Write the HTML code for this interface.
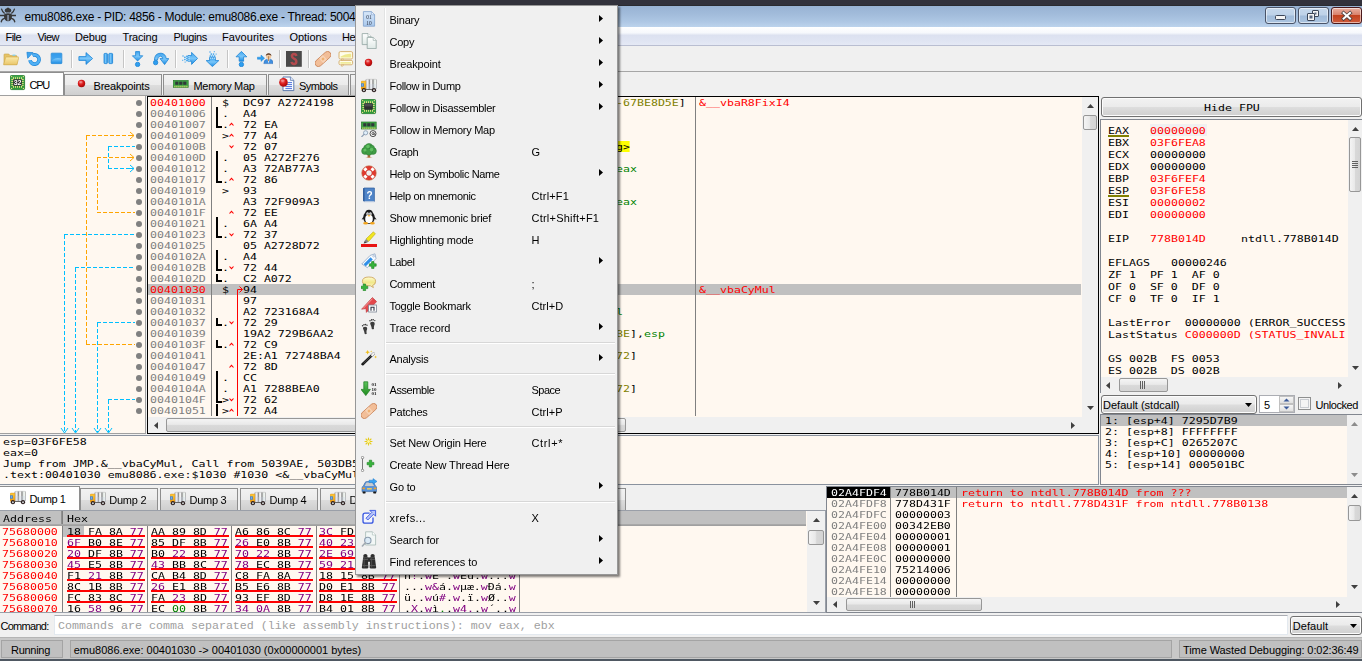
<!DOCTYPE html>
<html><head><meta charset="utf-8"><title>x64dbg</title><style>
html,body{margin:0;padding:0;}
body{width:1362px;height:661px;overflow:hidden;position:relative;background:#f0f0f0;font-family:"Liberation Sans",sans-serif;}
.a{position:absolute;display:block;}
.m{position:absolute;font:9.4px/11px "DejaVu Sans Mono","Liberation Mono",monospace;white-space:pre;transform:scaleX(1.2369);transform-origin:0 0;color:#000;margin-left:-0.6px;}
.c{position:absolute;font:11.66px/11px "Liberation Mono",monospace;white-space:pre;color:#000;}
.u{position:absolute;font-family:"Liberation Sans",sans-serif;white-space:pre;}
.wb{box-sizing:border-box;border:1px solid #4a5468;border-radius:3px;background:linear-gradient(#c6d8ec 0%,#bed2e8 48%,#a2bcda 52%,#aac4e0 100%);box-shadow:inset 0 0 0 1px rgba(255,255,255,.55);}
.sbv,.sbh{position:absolute;background:#f0f0f0;}
.th{position:absolute;box-sizing:border-box;border:1px solid #979797;border-radius:2px;}
.thv{background:linear-gradient(90deg,#f4f4f4 0%,#e9e9e9 45%,#d8d8d8 55%,#d4d4d4 100%);}
.thh{background:linear-gradient(#f4f4f4 0%,#e9e9e9 45%,#d8d8d8 55%,#d4d4d4 100%);}
</style></head><body>

<svg width="0" height="0" style="position:absolute;left:0;top:0"><defs>
<linearGradient id="gB" x1="0" y1="0" x2="0" y2="1"><stop offset="0" stop-color="#3fa4ef"/><stop offset=".5" stop-color="#79c6f9"/><stop offset="1" stop-color="#1b8ce4"/></linearGradient>
<linearGradient id="gBh" x1="0" y1="0" x2="1" y2="0"><stop offset="0" stop-color="#3fa4ef"/><stop offset=".5" stop-color="#79c6f9"/><stop offset="1" stop-color="#1b8ce4"/></linearGradient>
<linearGradient id="gF" x1="0" y1="0" x2="0" y2="1"><stop offset="0" stop-color="#fbe9a8"/><stop offset="1" stop-color="#e9c66a"/></linearGradient>
<linearGradient id="gG" x1="0" y1="0" x2="0" y2="1"><stop offset="0" stop-color="#5cc45c"/><stop offset="1" stop-color="#1e8a1e"/></linearGradient>
<radialGradient id="gR" cx=".4" cy=".35" r=".7"><stop offset="0" stop-color="#f07070"/><stop offset=".5" stop-color="#d81818"/><stop offset="1" stop-color="#9c0808"/></radialGradient>
<linearGradient id="gPg" x1="0" y1="0" x2="0" y2="1"><stop offset="0" stop-color="#d8e8fa"/><stop offset="1" stop-color="#a9c8ec"/></linearGradient>
<linearGradient id="gW" x1="0" y1="0" x2="0" y2="1"><stop offset="0" stop-color="#ffffff"/><stop offset="1" stop-color="#dfe9e6"/></linearGradient>
<linearGradient id="gY" x1="0" y1="0" x2="0" y2="1"><stop offset="0" stop-color="#fffbd0"/><stop offset=".5" stop-color="#f1e88a"/><stop offset="1" stop-color="#fdf6c0"/></linearGradient>
<linearGradient id="gT" x1="0" y1="0" x2="1" y2="0"><stop offset="0" stop-color="#e8e8e8"/><stop offset=".5" stop-color="#a8a8a8"/><stop offset="1" stop-color="#dcdcdc"/></linearGradient>
<linearGradient id="gTk" x1="0" y1="0" x2="1" y2="0"><stop offset="0" stop-color="#8e8e8e"/><stop offset=".1" stop-color="#e2e2e6"/><stop offset=".22" stop-color="#f6f6f8"/><stop offset=".33" stop-color="#7e7e7e"/><stop offset=".42" stop-color="#e4e4e4"/><stop offset=".54" stop-color="#f6f6f6"/><stop offset=".66" stop-color="#7e7e7e"/><stop offset=".76" stop-color="#e0e6e2"/><stop offset=".88" stop-color="#f2f6f2"/><stop offset="1" stop-color="#a0a0a0"/></linearGradient>
<linearGradient id="gCab" x1="0" y1="0" x2="0" y2="1"><stop offset="0" stop-color="#fbc83c"/><stop offset="1" stop-color="#f09c10"/></linearGradient>
</defs></svg>

<div class="a" style="left:0px;top:0px;width:1362px;height:5px;background:#32323c;"></div>
<div class="a" style="left:0px;top:5px;width:1362px;height:1px;background:#2a2b30;"></div>
<div class="a" style="left:0px;top:6px;width:1362px;height:21px;background:linear-gradient(#98b3d4 0%,#a2bcdb 40%,#aec7e4 75%,#bcd3ec 100%);"></div>
<svg class="a" style="left:0px;top:7px" width="16" height="16" viewBox="0 0 16 16"><g fill="#383838" stroke="none"><ellipse cx="8" cy="9.6" rx="4" ry="4.7"/><path d="M4.7 3.6Q4.7 1.4 6.8 1.2Q8 -.4 9.2 1.2Q11.3 1.4 11.3 3.6Q11.3 5.6 8 5.6Q4.7 5.6 4.7 3.6z"/></g><g fill="none" stroke="#383838" stroke-width="1.3" stroke-linecap="round"><path d="M4.8 6.6Q2.4 5.4 1.6 2.2M11.2 6.6Q13.6 5.4 14.4 2.2M-.5 8.5H16M4.6 11.4Q1.8 12 1.2 14.8M11.4 11.4Q14.2 12 14.8 14.8"/></g><rect x="7.2" y="8" width="1.7" height="5.6" fill="#8593a8"/><path d="M4.6 6.4Q8 5.2 11.4 6.4" stroke="#a9c0dc" stroke-width=".8" fill="none"/></svg>
<div class="u" style="left:24.5px;top:8.5px;height:16px;line-height:16px;font-size:12px;color:#000;letter-spacing:-0.283px;">emu8086.exe - PID: 4856 - Module: emu8086.exe - Thread: 5004</div>
<div class="a wb" style="left:1265px;top:7px;width:31px;height:17px;"><div class="a" style="left:9px;top:7px;width:9px;height:3px;background:#f4f4f4;border:1px solid #3c4658;border-radius:1.5px"></div></div>
<div class="a wb" style="left:1298px;top:7px;width:31px;height:17px;"><div class="a" style="left:13px;top:2px;width:5px;height:5px;border:1px solid #3c4658;background:#f4f4f4;box-shadow:inset 0 0 0 1.5px #f4f4f4, inset 0 0 0 3px #5a6880;border-radius:1px"></div><div class="a" style="left:8px;top:5px;width:6px;height:6px;border:1px solid #3c4658;background:#f4f4f4;box-shadow:inset 0 0 0 1.5px #f4f4f4, inset 0 0 0 3px #5a6880;border-radius:1px"></div></div>
<div class="a wb" style="left:1331px;top:7px;width:31px;height:17px;background:linear-gradient(#eab0a2 0%,#d9826c 45%,#c2421f 50%,#cf5c3c 100%);border-color:#4a1a1c"><svg class="a" style="left:8px;top:2px" width="14" height="12" viewBox="0 0 14 12"><path d="M3.6 3L10 8.6M10 3L3.6 8.6" stroke="#4a4040" stroke-width="3.6" stroke-linecap="square"/><path d="M3.6 3L10 8.6M10 3L3.6 8.6" stroke="#fff" stroke-width="2" stroke-linecap="square"/></svg></div>
<div class="a" style="left:0px;top:27px;width:1362px;height:19px;background:linear-gradient(#ffffff 0%,#f6f8fc 30%,#e9edf6 38%,#dce1f0 42%,#dfe4f2 70%,#e6eaf6 100%);"></div>
<div class="a" style="left:0px;top:45px;width:1362px;height:1px;background:#b9bed1;"></div>
<div class="u" style="left:5.5px;top:29px;height:16px;line-height:16px;font-size:11px;color:#000;letter-spacing:-0.559px;">File</div>
<div class="u" style="left:37.5px;top:29px;height:16px;line-height:16px;font-size:11px;color:#000;letter-spacing:-0.539px;">View</div>
<div class="u" style="left:75px;top:29px;height:16px;line-height:16px;font-size:11px;color:#000;letter-spacing:-0.184px;">Debug</div>
<div class="u" style="left:122.5px;top:29px;height:16px;line-height:16px;font-size:11px;color:#000;letter-spacing:-0.183px;">Tracing</div>
<div class="u" style="left:173.5px;top:29px;height:16px;line-height:16px;font-size:11px;color:#000;letter-spacing:-0.368px;">Plugins</div>
<div class="u" style="left:222px;top:29px;height:16px;line-height:16px;font-size:11px;color:#000;letter-spacing:0.064px;">Favourites</div>
<div class="u" style="left:289.5px;top:29px;height:16px;line-height:16px;font-size:11px;color:#000;letter-spacing:-0.06px;">Options</div>
<div class="u" style="left:342px;top:29px;height:16px;line-height:16px;font-size:11px;color:#000;letter-spacing:-0.406px;">Help</div>
<div class="a" style="left:0px;top:46px;width:1362px;height:25px;background:#f0f0f0;"></div>
<div class="a" style="left:0px;top:71px;width:1362px;height:1px;background:#a6a6a6;"></div>
<div class="a" style="left:71px;top:50px;width:1px;height:18px;background:#c5c5c5;"></div>
<div class="a" style="left:72px;top:50px;width:1px;height:18px;background:#fff;"></div>
<div class="a" style="left:123px;top:50px;width:1px;height:18px;background:#c5c5c5;"></div>
<div class="a" style="left:124px;top:50px;width:1px;height:18px;background:#fff;"></div>
<div class="a" style="left:175px;top:50px;width:1px;height:18px;background:#c5c5c5;"></div>
<div class="a" style="left:176px;top:50px;width:1px;height:18px;background:#fff;"></div>
<div class="a" style="left:227px;top:50px;width:1px;height:18px;background:#c5c5c5;"></div>
<div class="a" style="left:228px;top:50px;width:1px;height:18px;background:#fff;"></div>
<div class="a" style="left:279px;top:50px;width:1px;height:18px;background:#c5c5c5;"></div>
<div class="a" style="left:280px;top:50px;width:1px;height:18px;background:#fff;"></div>
<div class="a" style="left:308px;top:50px;width:1px;height:18px;background:#c5c5c5;"></div>
<div class="a" style="left:309px;top:50px;width:1px;height:18px;background:#fff;"></div>
<svg class="a" style="left:3px;top:51px" width="16" height="16" viewBox="0 0 16 16"><path d="M1 13.5V3.8q0-.8.8-.8h4l1.2 1.6h6.2q.8 0 .8.8V13.5z" fill="#e6c368" stroke="#c9a445" stroke-width=".6"/><rect x="9.5" y="3.6" width="3" height="1.2" fill="#7fd0f0"/><path d="M.6 13.8L2.6 6.6q.2-.6.9-.6H15.2q.8 0 .6.7L13.9 13.8z" fill="url(#gF)" stroke="#d0aa48" stroke-width=".6"/></svg>
<svg class="a" style="left:26px;top:51px" width="16" height="16" viewBox="0 0 16 16"><path d="M6.56 4.33A4.6 4.6 0 1 1 3.97 9.3" fill="none" stroke="#1c84d6" stroke-width="3.6"/><path d="M6.56 4.33A4.6 4.6 0 1 1 3.97 9.3" fill="none" stroke="#4fb0f5" stroke-width="2.4"/><path d="M.9 1.3L7 1.6L1.7 7.3z" fill="#3fa4ef" stroke="#1c84d6" stroke-width=".7" stroke-linejoin="round"/></svg>
<svg class="a" style="left:49px;top:51px" width="16" height="16" viewBox="0 0 16 16"><rect x="2.2" y="2.2" width="10.6" height="10.4" rx=".6" fill="url(#gB)" stroke="#1c84d6" stroke-width=".8" stroke-linejoin="round"/><path d="M3 3h9v4.6q-4-1.6-9 1.4z" fill="#2a96ea" opacity=".7"/></svg>
<svg class="a" style="left:78px;top:51px" width="16" height="16" viewBox="0 0 16 16"><path d="M.9 5.6H8V1.6L14.6 7.5L8 13.4V9.4H.9z" fill="url(#gB)" stroke="#1c84d6" stroke-width=".8" stroke-linejoin="round"/></svg>
<svg class="a" style="left:101px;top:51px" width="16" height="16" viewBox="0 0 16 16"><rect x="3" y="2.4" width="3.4" height="10.2" rx=".8" fill="url(#gBh)" stroke="#1c84d6" stroke-width=".8" stroke-linejoin="round"/><rect x="7.8" y="2.4" width="3.8" height="10.2" rx=".8" fill="url(#gBh)" stroke="#1c84d6" stroke-width=".8" stroke-linejoin="round"/></svg>
<svg class="a" style="left:130px;top:51px" width="16" height="16" viewBox="0 0 16 16"><path d="M5.6.6h4v4.2h3.2L7.6 10L2.4 4.8h3.2z" fill="url(#gB)" stroke="#1c84d6" stroke-width=".8" stroke-linejoin="round"/><circle cx="7.6" cy="13.4" r="2.2" fill="#2f9ff0" stroke="#1c84d6" stroke-width=".8" stroke-linejoin="round"/></svg>
<svg class="a" style="left:153px;top:51px" width="16" height="16" viewBox="0 0 16 16"><path d="M1.4 9.2Q1.6 2 8 2.2Q12.6 2.6 13.2 7.6H15.8L11.6 13.6L7 7.6H9.8Q9.4 5.2 7.4 5.2Q4.6 5.4 4.4 9.2z" fill="url(#gB)" stroke="#1c84d6" stroke-width=".8" stroke-linejoin="round"/><circle cx="2.6" cy="11.6" r="2.2" fill="#2f9ff0" stroke="#1c84d6" stroke-width=".8" stroke-linejoin="round"/></svg>
<svg class="a" style="left:182px;top:51px" width="16" height="16" viewBox="0 0 16 16"><path d="M6 4.6H9.6V1.4L15.6 7.4L9.6 13.4V10.2H6z" fill="url(#gB)" stroke="#1c84d6" stroke-width=".8" stroke-linejoin="round"/><g fill="#2f9ff0"><rect x="4.2" y="4.6" width="1.5" height="1.5"/><rect x="4.2" y="6.7" width="1.5" height="1.5"/><rect x="4.2" y="8.8" width="1.5" height="1.5"/><rect x="2.2" y="5.6" width="1.4" height="1.4"/><rect x="2.2" y="7.8" width="1.4" height="1.4"/><rect x=".4" y="4.4" width="1.2" height="1.2"/><rect x=".2" y="8.8" width="1" height="1"/><rect x="2.6" y="10.6" width="1" height="1"/><rect x="6.4" y="5" width="1.2" height="1.2" fill="#bfe4fb"/><rect x="6.4" y="7" width="1.2" height="1.2" fill="#bfe4fb"/><rect x="6.4" y="9" width="1.2" height="1.2" fill="#bfe4fb"/></g></svg>
<svg class="a" style="left:205px;top:51px" width="16" height="16" viewBox="0 0 16 16"><path d="M4.6 6.4V9.6H1.2L7.4 15.6L13.8 9.6H10.4V6.4z" fill="url(#gB)" stroke="#1c84d6" stroke-width=".8" stroke-linejoin="round"/><g fill="#2f9ff0"><rect x="4.6" y="4.4" width="1.5" height="1.5"/><rect x="6.7" y="4.4" width="1.5" height="1.5"/><rect x="8.8" y="4.4" width="1.5" height="1.5"/><rect x="5.6" y="2.4" width="1.4" height="1.4"/><rect x="7.8" y="2.4" width="1.4" height="1.4"/><rect x="4.4" y=".4" width="1.2" height="1.2"/><rect x="8.8" y=".2" width="1" height="1"/><rect x="10.6" y="2.6" width="1" height="1"/><rect x="5" y="6.6" width="1.2" height="1.2" fill="#bfe4fb"/><rect x="7" y="6.6" width="1.2" height="1.2" fill="#bfe4fb"/><rect x="9" y="6.6" width="1.2" height="1.2" fill="#bfe4fb"/></g></svg>
<svg class="a" style="left:234px;top:51px" width="16" height="16" viewBox="0 0 16 16"><path d="M7.4.4L12.8 5.8H9.6V10.2H5.2V5.8H2z" fill="url(#gB)" stroke="#1c84d6" stroke-width=".8" stroke-linejoin="round"/><circle cx="7.4" cy="13.5" r="2.2" fill="#2f9ff0" stroke="#1c84d6" stroke-width=".8" stroke-linejoin="round"/></svg>
<svg class="a" style="left:257px;top:51px" width="16" height="16" viewBox="0 0 16 16"><path d="M.4 6.2H4V4L7.6 7.2L4 10.4V8.2H.4z" fill="#2f9ff0" stroke="#1c84d6" stroke-width=".5"/><circle cx="11.6" cy="5.2" r="2.6" fill="#f2c9a0"/><path d="M8.8 5Q9 2.2 11.6 2.2Q14.2 2.2 14.4 5Q13 3.6 11.6 3.8Q10 3.6 8.8 5z" fill="#5a3a28"/><path d="M6.8 12.6Q7 8.6 9.8 8.2L11.6 9.6L13.4 8.2Q16 8.6 16 12.6z" fill="#3f8fe0" stroke="#2a6cb8" stroke-width=".5"/><path d="M10.6 8.4L11.6 12.4L12.6 8.4L11.6 9.4z" fill="#fff"/><path d="M11.6 5.2v5" stroke="#b07840" stroke-width=".9"/></svg>
<svg class="a" style="left:286px;top:51px" width="16" height="16" viewBox="0 0 16 16"><rect x="0" y="0" width="15.8" height="15.8" fill="#4b4a4a"/><path d="M10.3 5Q10.1 3.1 8 3.1Q5.9 3.1 5.9 5.1Q5.9 6.7 8 7.7Q10.3 8.7 10.3 10.7Q10.3 12.9 8 12.9Q5.8 12.9 5.6 10.9" fill="none" stroke="#b34a4e" stroke-width="2.5" stroke-linecap="butt"/></svg>
<svg class="a" style="left:315px;top:51px" width="16" height="16" viewBox="0 0 16 16"><g transform="rotate(-42 8 8)"><rect x="-1.6" y="4.6" width="19.2" height="6.8" rx="3.4" fill="#f2be98" stroke="#c98458" stroke-width=".8"/><rect x="5.4" y="5" width="5.2" height="6" fill="#f7d3b6"/><rect x="6.8" y="6.8" width="2.4" height="2.4" fill="#f0b070"/></g></svg>
<svg class="a" style="left:338px;top:51px" width="16" height="16" viewBox="0 0 16 16"><rect x="1" y=".6" width="13.6" height="7.4" rx="1.4" fill="#fffdea" stroke="#d2aa66" stroke-width=".9"/><path d="M2.6 5.6Q8 2.2 13.2 2.8V6.4H2.6z" fill="#eee98e"/><path d="M3.4 8L3.8 9.8L5.6 8z" fill="#fffdea" stroke="#d2aa66" stroke-width=".7"/><rect x="1" y="9.4" width="13.6" height="4.4" rx="1.4" fill="#fffdea" stroke="#d2aa66" stroke-width=".9"/><rect x="2.4" y="11" width="10.8" height="1.8" fill="#f1ec9c"/><path d="M3.4 13.8L3.8 15.6L5.8 13.8z" fill="#fffdea" stroke="#d2aa66" stroke-width=".7"/></svg>
<div class="a" style="left:0px;top:72px;width:1362px;height:24px;background:#f0f0f0;"></div>
<div class="a" style="left:0px;top:95px;width:500px;height:1px;background:#a0a0a0;"></div>
<div class="a" style="left:64px;top:74px;width:98px;height:21px;background:linear-gradient(#f2f2f2 0%,#ebebeb 50%,#dddddd 51%,#cfcfcf 100%);border:1px solid #8e8e8e;border-bottom:none;box-sizing:border-box"></div>
<div class="a" style="left:163px;top:74px;width:104px;height:21px;background:linear-gradient(#f2f2f2 0%,#ebebeb 50%,#dddddd 51%,#cfcfcf 100%);border:1px solid #8e8e8e;border-bottom:none;box-sizing:border-box"></div>
<div class="a" style="left:268px;top:74px;width:81px;height:21px;background:linear-gradient(#f2f2f2 0%,#ebebeb 50%,#dddddd 51%,#cfcfcf 100%);border:1px solid #8e8e8e;border-bottom:none;box-sizing:border-box"></div>
<div class="a" style="left:350px;top:74px;width:70px;height:21px;background:linear-gradient(#f2f2f2 0%,#ebebeb 50%,#dddddd 51%,#cfcfcf 100%);border:1px solid #8e8e8e;border-bottom:none;box-sizing:border-box"></div>
<div class="a" style="left:0px;top:72px;width:64px;height:23px;background:#fff;border:1px solid #8e8e8e;border-bottom:none;border-left:none;box-sizing:border-box"></div>
<svg class="a" style="will-change:transform;left:10px;top:75px" width="16" height="16" viewBox="0 0 16 16"><rect x=".4" y=".4" width="14.2" height="14.2" rx="1.2" fill="#2f9a3a" stroke="#1f7a28" stroke-width=".8"/><rect x="1" y="1" width="13" height="5.5" rx=".8" fill="#52b85a" opacity=".45"/><rect x="3.05" y="2.2" width=".9" height="2.2" fill="#f1e08a"/><rect x="3.05" y="10.6" width=".9" height="2.2" fill="#f1e08a"/><rect x="5.05" y="2.2" width=".9" height="2.2" fill="#f1e08a"/><rect x="5.05" y="10.6" width=".9" height="2.2" fill="#f1e08a"/><rect x="7.05" y="2.2" width=".9" height="2.2" fill="#f1e08a"/><rect x="7.05" y="10.6" width=".9" height="2.2" fill="#f1e08a"/><rect x="9.05" y="2.2" width=".9" height="2.2" fill="#f1e08a"/><rect x="9.05" y="10.6" width=".9" height="2.2" fill="#f1e08a"/><rect x="11.05" y="2.2" width=".9" height="2.2" fill="#f1e08a"/><rect x="11.05" y="10.6" width=".9" height="2.2" fill="#f1e08a"/><rect x="1.3" y="4.15" width="2.2" height=".9" fill="#f1e08a"/><rect x="11.5" y="4.15" width="2.2" height=".9" fill="#f1e08a"/><rect x="1.3" y="6.05" width="2.2" height=".9" fill="#f1e08a"/><rect x="11.5" y="6.05" width="2.2" height=".9" fill="#f1e08a"/><rect x="1.3" y="7.95" width="2.2" height=".9" fill="#f1e08a"/><rect x="11.5" y="7.95" width="2.2" height=".9" fill="#f1e08a"/><rect x="1.3" y="9.85" width="2.2" height=".9" fill="#f1e08a"/><rect x="11.5" y="9.85" width="2.2" height=".9" fill="#f1e08a"/><circle cx="1.6" cy="1.6" r=".65" fill="#f1e08a"/><circle cx="13.4" cy="1.6" r=".65" fill="#f1e08a"/><circle cx="1.6" cy="13.4" r=".65" fill="#f1e08a"/><circle cx="13.4" cy="13.4" r=".65" fill="#f1e08a"/><rect x="3.2" y="4.2" width="8.6" height="6.6" rx=".7" fill="#2e2e30"/><text x="7.5" y="10.05" font-family="Liberation Sans,sans-serif" font-weight="bold" font-size="7" letter-spacing="-.2" text-anchor="middle" fill="#fff" opacity=".99">32</text></svg>
<div class="u" style="left:29.5px;top:77px;height:16px;line-height:16px;font-size:11px;color:#000;letter-spacing:-1.245px;">CPU</div>
<svg class="a" style="left:74px;top:76px" width="16" height="16" viewBox="0 0 16 16"><circle cx="7.5" cy="7.5" r="3.7" fill="url(#gR)"/><ellipse cx="6.8" cy="6" rx="1.8" ry="1" fill="#fff" opacity=".25"/></svg>
<div class="u" style="left:93.5px;top:78px;height:16px;line-height:16px;font-size:11px;color:#000;letter-spacing:-0.19px;">Breakpoints</div>
<svg class="a" style="left:173px;top:76px" width="16" height="16" viewBox="0 0 16 16"><rect x=".4" y="4.4" width="14.8" height="7" fill="#3fa744" stroke="#2a7d2e" stroke-width=".7"/><rect x="2.2" y="5.6" width="3.2" height="3.2" fill="#30383a"/><rect x="6.2" y="5.6" width="3.2" height="3.2" fill="#30383a"/><rect x="10.2" y="5.6" width="3.2" height="3.2" fill="#30383a"/><rect x="1.4" y="9.8" width="1" height="1.6" fill="#e8d878"/><rect x="3.4" y="9.8" width="1" height="1.6" fill="#e8d878"/><rect x="5.4" y="9.8" width="1" height="1.6" fill="#e8d878"/><rect x="7.4" y="9.8" width="1" height="1.6" fill="#e8d878"/><rect x="9.4" y="9.8" width="1" height="1.6" fill="#e8d878"/><rect x="11.4" y="9.8" width="1" height="1.6" fill="#e8d878"/><rect x="13.4" y="9.8" width="1" height="1.6" fill="#e8d878"/></svg>
<div class="u" style="left:193.5px;top:78px;height:16px;line-height:16px;font-size:11px;color:#000;letter-spacing:-0.319px;">Memory Map</div>
<svg class="a" style="left:279px;top:76px" width="16" height="16" viewBox="0 0 16 16"><path d="M4 1H11.4L14.8 4.4V14.6H4z" fill="#fafcff" stroke="#4f6fa8" stroke-width=".9"/><path d="M11.4 1V4.4H14.8" fill="#dfe8f8" stroke="#4f6fa8" stroke-width=".7"/><g stroke="#3a62d8" stroke-width=".9"><path d="M9 6.6H13M8 8.6H13M6.4 10.6H13M6.4 12.6H13"/></g><circle cx="4.5" cy="6.4" r="4.3" fill="url(#gR)"/><ellipse cx="3.6" cy="4.6" rx="2" ry="1.2" fill="#fff" opacity=".3"/></svg>
<div class="u" style="left:299px;top:78px;height:16px;line-height:16px;font-size:11px;color:#000;letter-spacing:-0.527px;">Symbols</div>
<div class="a" style="left:0px;top:96px;width:145px;height:337px;background:#fff8f0;"></div>
<div class="a" style="left:145px;top:96px;width:1px;height:338px;background:#a0a0a0;"></div>
<div class="a" style="left:146px;top:96px;width:1px;height:338px;background:#f0f0f0;"></div>
<div class="a" style="left:0px;top:433px;width:146px;height:1px;background:#a0a0a0;"></div>
<div class="a" style="left:147px;top:96px;width:952px;height:338px;background:#000;"></div>
<div class="a" style="left:148px;top:97px;width:950px;height:336px;background:#fff8f0;"></div>
<svg class="a" style="left:0;top:0" width="147" height="436" viewBox="0 0 147 436"><path d="M86 135.5H130" fill="none" stroke="#ffa500" stroke-width="1" stroke-dasharray="4 2" shape-rendering="crispEdges"/><path d="M86.5 135.5V344.5" fill="none" stroke="#ffa500" stroke-width="1" stroke-dasharray="4 2" shape-rendering="crispEdges"/><path d="M86 344.5H135" fill="none" stroke="#ffa500" stroke-width="1" stroke-dasharray="4 2" shape-rendering="crispEdges"/><path d="M130 132L134 135.5L130 139" fill="none" stroke="#ffa500" stroke-width="1"/><path d="M130 135.5H134" fill="none" stroke="#ffa500" stroke-width="1"/><path d="M97 157.5H130" fill="none" stroke="#ffa500" stroke-width="1" stroke-dasharray="4 2" shape-rendering="crispEdges"/><path d="M97.5 157.5V212.5" fill="none" stroke="#ffa500" stroke-width="1" stroke-dasharray="4 2" shape-rendering="crispEdges"/><path d="M97 212.5H135" fill="none" stroke="#ffa500" stroke-width="1" stroke-dasharray="4 2" shape-rendering="crispEdges"/><path d="M130 154L134 157.5L130 161" fill="none" stroke="#ffa500" stroke-width="1"/><path d="M130 157.5H134" fill="none" stroke="#ffa500" stroke-width="1"/><path d="M108 146.5H135" fill="none" stroke="#00bfff" stroke-width="1" stroke-dasharray="4 2" shape-rendering="crispEdges"/><path d="M108.5 146.5V168.5" fill="none" stroke="#00bfff" stroke-width="1" stroke-dasharray="4 2" shape-rendering="crispEdges"/><path d="M108 168.5H130" fill="none" stroke="#00bfff" stroke-width="1" stroke-dasharray="4 2" shape-rendering="crispEdges"/><path d="M130 165L134 168.5L130 172" fill="none" stroke="#00bfff" stroke-width="1"/><path d="M130 168.5H134" fill="none" stroke="#00bfff" stroke-width="1"/><path d="M64 234.5H135" fill="none" stroke="#00bfff" stroke-width="1" stroke-dasharray="4 2" shape-rendering="crispEdges"/><path d="M64.5 234.5V432" fill="none" stroke="#00bfff" stroke-width="1" stroke-dasharray="4 2" shape-rendering="crispEdges"/><path d="M61 428L64.5 433L68 428" fill="none" stroke="#00bfff" stroke-width="1"/><path d="M75 267.5H135" fill="none" stroke="#00bfff" stroke-width="1" stroke-dasharray="4 2" shape-rendering="crispEdges"/><path d="M75.5 267.5V432" fill="none" stroke="#00bfff" stroke-width="1" stroke-dasharray="4 2" shape-rendering="crispEdges"/><path d="M72 428L75.5 433L79 428" fill="none" stroke="#00bfff" stroke-width="1"/><path d="M97 322.5H135" fill="none" stroke="#00bfff" stroke-width="1" stroke-dasharray="4 2" shape-rendering="crispEdges"/><path d="M97.5 322.5V432" fill="none" stroke="#00bfff" stroke-width="1" stroke-dasharray="4 2" shape-rendering="crispEdges"/><path d="M94 428L97.5 433L101 428" fill="none" stroke="#00bfff" stroke-width="1"/><path d="M108 399.5H135" fill="none" stroke="#00bfff" stroke-width="1" stroke-dasharray="4 2" shape-rendering="crispEdges"/><path d="M108.5 399.5V432" fill="none" stroke="#00bfff" stroke-width="1" stroke-dasharray="4 2" shape-rendering="crispEdges"/><path d="M105 428L108.5 433L112 428" fill="none" stroke="#00bfff" stroke-width="1"/></svg>
<div class="a" style="left:135.5px;top:99.5px;width:6px;height:6px;border-radius:3px;background:#808080"></div>
<div class="a" style="left:135.5px;top:110.5px;width:6px;height:6px;border-radius:3px;background:#808080"></div>
<div class="a" style="left:135.5px;top:121.5px;width:6px;height:6px;border-radius:3px;background:#808080"></div>
<div class="a" style="left:135.5px;top:132.5px;width:6px;height:6px;border-radius:3px;background:#808080"></div>
<div class="a" style="left:135.5px;top:143.5px;width:6px;height:6px;border-radius:3px;background:#808080"></div>
<div class="a" style="left:135.5px;top:154.5px;width:6px;height:6px;border-radius:3px;background:#808080"></div>
<div class="a" style="left:135.5px;top:165.5px;width:6px;height:6px;border-radius:3px;background:#808080"></div>
<div class="a" style="left:135.5px;top:176.5px;width:6px;height:6px;border-radius:3px;background:#808080"></div>
<div class="a" style="left:135.5px;top:187.5px;width:6px;height:6px;border-radius:3px;background:#808080"></div>
<div class="a" style="left:135.5px;top:198.5px;width:6px;height:6px;border-radius:3px;background:#808080"></div>
<div class="a" style="left:135.5px;top:209.5px;width:6px;height:6px;border-radius:3px;background:#808080"></div>
<div class="a" style="left:135.5px;top:220.5px;width:6px;height:6px;border-radius:3px;background:#808080"></div>
<div class="a" style="left:135.5px;top:231.5px;width:6px;height:6px;border-radius:3px;background:#808080"></div>
<div class="a" style="left:135.5px;top:242.5px;width:6px;height:6px;border-radius:3px;background:#808080"></div>
<div class="a" style="left:135.5px;top:253.5px;width:6px;height:6px;border-radius:3px;background:#808080"></div>
<div class="a" style="left:135.5px;top:264.5px;width:6px;height:6px;border-radius:3px;background:#808080"></div>
<div class="a" style="left:135.5px;top:275.5px;width:6px;height:6px;border-radius:3px;background:#808080"></div>
<div class="a" style="left:135.5px;top:286.5px;width:6px;height:6px;border-radius:3px;background:#808080"></div>
<div class="a" style="left:135.5px;top:297.5px;width:6px;height:6px;border-radius:3px;background:#808080"></div>
<div class="a" style="left:135.5px;top:308.5px;width:6px;height:6px;border-radius:3px;background:#808080"></div>
<div class="a" style="left:135.5px;top:319.5px;width:6px;height:6px;border-radius:3px;background:#808080"></div>
<div class="a" style="left:135.5px;top:330.5px;width:6px;height:6px;border-radius:3px;background:#808080"></div>
<div class="a" style="left:135.5px;top:341.5px;width:6px;height:6px;border-radius:3px;background:#808080"></div>
<div class="a" style="left:135.5px;top:352.5px;width:6px;height:6px;border-radius:3px;background:#808080"></div>
<div class="a" style="left:135.5px;top:363.5px;width:6px;height:6px;border-radius:3px;background:#808080"></div>
<div class="a" style="left:135.5px;top:374.5px;width:6px;height:6px;border-radius:3px;background:#808080"></div>
<div class="a" style="left:135.5px;top:385.5px;width:6px;height:6px;border-radius:3px;background:#808080"></div>
<div class="a" style="left:135.5px;top:396.5px;width:6px;height:6px;border-radius:3px;background:#808080"></div>
<div class="a" style="left:135.5px;top:407.5px;width:6px;height:6px;border-radius:3px;background:#808080"></div>
<div class="a" style="left:148px;top:284px;width:933px;height:11px;background:#c0c0c0;"></div>
<div class="a" style="left:211px;top:97px;width:1px;height:319px;background:#808080;"></div>
<div class="a" style="left:695px;top:97px;width:1px;height:319px;background:#808080;"></div>
<div class="m" style="left:151px;top:97px;color:#ff0000;">00401000</div>
<div class="m" style="left:223px;top:97px;">$  DC97 A2724198</div>
<div class="m" style="left:151px;top:108px;color:#808080;">00401006</div>
<div class="m" style="left:223px;top:108px;">.  A4</div>
<div class="m" style="left:151px;top:119px;color:#808080;">00401007</div>
<div class="m" style="left:223px;top:119px;">.  72 EA</div>
<div class="m" style="left:151px;top:130px;color:#808080;">00401009</div>
<div class="m" style="left:223px;top:130px;">&gt;  77 A4</div>
<div class="m" style="left:151px;top:141px;color:#808080;">0040100B</div>
<div class="m" style="left:223px;top:141px;">   72 07</div>
<div class="m" style="left:151px;top:152px;color:#808080;">0040100D</div>
<div class="m" style="left:223px;top:152px;">.  05 A272F276</div>
<div class="m" style="left:151px;top:163px;color:#808080;">00401012</div>
<div class="m" style="left:223px;top:163px;">.  A3 72AB77A3</div>
<div class="m" style="left:151px;top:174px;color:#808080;">00401017</div>
<div class="m" style="left:223px;top:174px;">.  72 86</div>
<div class="m" style="left:151px;top:185px;color:#808080;">00401019</div>
<div class="m" style="left:223px;top:185px;">&gt;  93</div>
<div class="m" style="left:151px;top:196px;color:#808080;">0040101A</div>
<div class="m" style="left:223px;top:196px;">   A3 72F909A3</div>
<div class="m" style="left:151px;top:207px;color:#808080;">0040101F</div>
<div class="m" style="left:223px;top:207px;">   72 EE</div>
<div class="m" style="left:151px;top:218px;color:#808080;">00401021</div>
<div class="m" style="left:223px;top:218px;">.  6A A4</div>
<div class="m" style="left:151px;top:229px;color:#808080;">00401023</div>
<div class="m" style="left:223px;top:229px;">.  72 37</div>
<div class="m" style="left:151px;top:240px;color:#808080;">00401025</div>
<div class="m" style="left:223px;top:240px;">   05 A2728D72</div>
<div class="m" style="left:151px;top:251px;color:#808080;">0040102A</div>
<div class="m" style="left:223px;top:251px;">.  A4</div>
<div class="m" style="left:151px;top:262px;color:#808080;">0040102B</div>
<div class="m" style="left:223px;top:262px;">.  72 44</div>
<div class="m" style="left:151px;top:273px;color:#808080;">0040102D</div>
<div class="m" style="left:223px;top:273px;">.  C2 A072</div>
<div class="m" style="left:151px;top:284px;color:#ff0000;">00401030</div>
<div class="m" style="left:223px;top:284px;">$  94</div>
<div class="m" style="left:151px;top:295px;color:#808080;">00401031</div>
<div class="m" style="left:223px;top:295px;">   97</div>
<div class="m" style="left:151px;top:306px;color:#808080;">00401032</div>
<div class="m" style="left:223px;top:306px;">   A2 723168A4</div>
<div class="m" style="left:151px;top:317px;color:#808080;">00401037</div>
<div class="m" style="left:223px;top:317px;">.  72 29</div>
<div class="m" style="left:151px;top:328px;color:#808080;">00401039</div>
<div class="m" style="left:223px;top:328px;">   19A2 729B6AA2</div>
<div class="m" style="left:151px;top:339px;color:#808080;">0040103F</div>
<div class="m" style="left:223px;top:339px;">.  72 C9</div>
<div class="m" style="left:151px;top:350px;color:#808080;">00401041</div>
<div class="m" style="left:223px;top:350px;">   2E:A1 72748BA4</div>
<div class="m" style="left:151px;top:361px;color:#808080;">00401047</div>
<div class="m" style="left:223px;top:361px;">   72 8D</div>
<div class="m" style="left:151px;top:372px;color:#808080;">00401049</div>
<div class="m" style="left:223px;top:372px;">.  CC</div>
<div class="m" style="left:151px;top:383px;color:#808080;">0040104A</div>
<div class="m" style="left:223px;top:383px;">.  A1 7288BEA0</div>
<div class="m" style="left:151px;top:394px;color:#808080;">0040104F</div>
<div class="m" style="left:223px;top:394px;">&gt;  72 62</div>
<div class="m" style="left:151px;top:405px;color:#808080;">00401051</div>
<div class="m" style="left:223px;top:405px;">&gt;  72 A4</div>
<svg class="a" style="left:225px;top:97px" width="12" height="320" viewBox="225 97 12 320"><path d="M229.5 125.5L231.5 123.3L233.5 125.5M229.5 136.5L231.5 134.3L233.5 136.5M229.5 145.5L231.5 147.7L233.5 145.5M229.5 180.5L231.5 178.3L233.5 180.5M229.5 213.5L231.5 211.3L233.5 213.5M229.5 233.5L231.5 235.7L233.5 233.5M229.5 266.5L231.5 268.7L233.5 266.5M229.5 321.5L231.5 323.7L233.5 321.5M229.5 345.5L231.5 343.3L233.5 345.5M229.5 367.5L231.5 365.3L233.5 367.5M229.5 398.5L231.5 400.7L233.5 398.5M229.5 411.5L231.5 409.3L233.5 411.5" fill="none" stroke="#ff0000" stroke-width="1.1"/></svg>
<div class="a" style="left:216px;top:107px;width:2px;height:21px;background:#000;"></div>
<div class="a" style="left:216px;top:126px;width:6px;height:2px;background:#000;"></div>
<div class="a" style="left:216px;top:151px;width:2px;height:32px;background:#000;"></div>
<div class="a" style="left:216px;top:181px;width:6px;height:2px;background:#000;"></div>
<div class="a" style="left:216px;top:217px;width:2px;height:21px;background:#000;"></div>
<div class="a" style="left:216px;top:236px;width:6px;height:2px;background:#000;"></div>
<div class="a" style="left:216px;top:250px;width:2px;height:21px;background:#000;"></div>
<div class="a" style="left:216px;top:269px;width:6px;height:2px;background:#000;"></div>
<div class="a" style="left:216px;top:274px;width:2px;height:8px;background:#000;"></div>
<div class="a" style="left:216px;top:280px;width:6px;height:2px;background:#000;"></div>
<div class="a" style="left:216px;top:318px;width:2px;height:8px;background:#000;"></div>
<div class="a" style="left:216px;top:324px;width:6px;height:2px;background:#000;"></div>
<div class="a" style="left:216px;top:340px;width:2px;height:8px;background:#000;"></div>
<div class="a" style="left:216px;top:346px;width:6px;height:2px;background:#000;"></div>
<div class="a" style="left:216px;top:371px;width:2px;height:32px;background:#000;"></div>
<div class="a" style="left:216px;top:401px;width:6px;height:2px;background:#000;"></div>
<div class="a" style="left:216px;top:404px;width:2px;height:12px;background:#000;"></div>
<svg class="a" style="left:230px;top:280px" width="16" height="140" viewBox="230 280 16 140"><path d="M237.5 416V289.5H242" fill="none" stroke="#ff0000"/><path d="M239.5 286.5L242.5 289.5L239.5 292.5" fill="none" stroke="#ff0000"/></svg>
<div class="m" style="left:617px;top:97px;"><span style="color:#808000;">-67BE8D5E</span>]</div>
<div class="m" style="left:617px;top:141px;"><span style="color:#000;background:#ffff00;">g&gt;</span></div>
<div class="m" style="left:617px;top:163px;"><span style="color:#008300;">eax</span></div>
<div class="m" style="left:617px;top:196px;"><span style="color:#008300;">eax</span></div>
<div class="m" style="left:617px;top:306px;"><span style="color:#008300;">l</span></div>
<div class="m" style="left:617px;top:328px;"><span style="color:#808000;">BE</span>],<span style="color:#008300;">esp</span></div>
<div class="m" style="left:617px;top:350px;"><span style="color:#808000;">72</span>]</div>
<div class="m" style="left:617px;top:383px;"><span style="color:#808000;">72</span>]</div>
<div class="m" style="left:700px;top:97px;color:#ff0000;">&amp;__vbaR8FixI4</div>
<div class="m" style="left:700px;top:284px;color:#ff0000;">&amp;__vbaCyMul</div>
<div class="a" style="left:1082px;top:97px;width:16px;height:320px;background:#f0f0f0;"></div>
<svg class="a" style="left:1086.5px;top:104px" width="7" height="4" viewBox="0 -2 7 4"><polygon points="0,2 3.5,-2 7,2" fill="#404040"/></svg>
<svg class="a" style="left:1086.5px;top:405.5px" width="7" height="4" viewBox="0 -2 7 4"><polygon points="0,-2 3.5,2 7,-2" fill="#404040"/></svg>
<div class="th thv" style="left:1083px;top:115.3px;width:14px;height:15.2px"></div>
<div class="a" style="left:148px;top:417px;width:934px;height:16px;background:#f0f0f0;"></div>
<svg class="a" style="left:154px;top:421.5px" width="4" height="7" viewBox="-2 0 4 7"><polygon points="2,0 -2,3.5 2,7" fill="#404040"/></svg>
<svg class="a" style="left:1071px;top:421.5px" width="4" height="7" viewBox="-2 0 4 7"><polygon points="-2,0 2,3.5 -2,7" fill="#404040"/></svg>
<div class="th thh" style="left:166px;top:418px;width:460px;height:14px"></div>
<div class="a" style="left:1082px;top:417px;width:16px;height:16px;background:#f0f0f0;"></div>
<div class="a" style="left:1101px;top:97px;width:261px;height:20px;box-sizing:border-box;border:1px solid #707070;border-radius:3px;background:linear-gradient(#f2f2f2 0%,#ebebeb 48%,#dddddd 52%,#cfcfcf 100%);box-shadow:inset 0 0 0 1px #fcfcfc"></div>
<div class="m" style="left:1205px;top:102px;">Hide FPU</div>
<div class="a" style="left:1100px;top:119px;width:262px;height:274px;background:#828790;"></div>
<div class="a" style="left:1101px;top:120px;width:261px;height:273px;background:#f0f0f0;"></div>
<div class="a" style="left:1101px;top:120px;width:247px;height:257px;background:#fff8f0;"></div>
<div class="a" style="left:1150px;top:124px;width:57px;height:12px;background:#f0f0f0;"></div>
<div class="m" style="left:1108.7px;top:125px;">EAX</div>
<div class="m" style="left:1150.7px;top:125px;"><span style="color:#ff0000;">00000000</span></div>
<div class="a" style="left:1108px;top:135px;width:21px;height:2px;background:#808000;"></div>
<div class="m" style="left:1108.7px;top:137px;">EBX</div>
<div class="m" style="left:1150.7px;top:137px;"><span style="color:#ff0000;">03F6FEA8</span></div>
<div class="m" style="left:1108.7px;top:149px;">ECX</div>
<div class="m" style="left:1150.7px;top:149px;">00000000</div>
<div class="m" style="left:1108.7px;top:161px;">EDX</div>
<div class="m" style="left:1150.7px;top:161px;">00000000</div>
<div class="m" style="left:1108.7px;top:173px;">EBP</div>
<div class="m" style="left:1150.7px;top:173px;"><span style="color:#ff0000;">03F6FEF4</span></div>
<div class="m" style="left:1108.7px;top:185px;">ESP</div>
<div class="m" style="left:1150.7px;top:185px;"><span style="color:#ff0000;">03F6FE58</span></div>
<div class="a" style="left:1108px;top:195px;width:21px;height:2px;background:#808000;"></div>
<div class="m" style="left:1108.7px;top:197px;">ESI</div>
<div class="m" style="left:1150.7px;top:197px;"><span style="color:#ff0000;">00000002</span></div>
<div class="m" style="left:1108.7px;top:209px;">EDI</div>
<div class="m" style="left:1150.7px;top:209px;"><span style="color:#ff0000;">00000000</span></div>
<div class="m" style="left:1108.7px;top:233px;">EIP</div>
<div class="m" style="left:1150.7px;top:233px;"><span style="color:#ff0000;">778B014D</span></div>
<div class="m" style="left:1241.7px;top:233px;">ntdll.778B014D</div>
<div class="m" style="left:1108.7px;top:257px;">EFLAGS</div>
<div class="m" style="left:1171.7px;top:257px;">00000246</div>
<div class="m" style="left:1108.7px;top:269px;">ZF 1  PF 1  AF 0</div>
<div class="m" style="left:1108.7px;top:281px;">OF 0  SF 0  DF 0</div>
<div class="m" style="left:1108.7px;top:293px;">CF 0  TF 0  IF 1</div>
<div class="m" style="left:1108.7px;top:317px;">LastError  00000000 (ERROR_SUCCESS</div>
<div class="m" style="left:1108.7px;top:329px;">LastStatus <span style="color:#ff0000;">C000000D (STATUS_INVALI</span></div>
<div class="m" style="left:1108.7px;top:353px;">GS 002B  FS 0053</div>
<div class="m" style="left:1108.7px;top:365px;">ES 002B  DS 002B</div>
<div class="a" style="left:1348px;top:120px;width:14px;height:257px;background:#f0f0f0;"></div>
<svg class="a" style="left:1351.5px;top:126.5px" width="7" height="4" viewBox="0 -2 7 4"><polygon points="0,2 3.5,-2 7,2" fill="#404040"/></svg>
<svg class="a" style="left:1351.5px;top:365.5px" width="7" height="4" viewBox="0 -2 7 4"><polygon points="0,-2 3.5,2 7,-2" fill="#404040"/></svg>
<div class="th thv" style="left:1349px;top:137px;width:12px;height:55px"></div>
<div class="a" style="left:1352px;top:161px;width:6px;height:1px;background:#606060;"></div>
<div class="a" style="left:1352px;top:163px;width:6px;height:1px;background:#606060;"></div>
<div class="a" style="left:1352px;top:165px;width:6px;height:1px;background:#606060;"></div>
<div class="a" style="left:1352px;top:167px;width:6px;height:1px;background:#606060;"></div>
<div class="a" style="left:1101px;top:377px;width:247px;height:16px;background:#f0f0f0;"></div>
<svg class="a" style="left:1106px;top:381.5px" width="4" height="7" viewBox="-2 0 4 7"><polygon points="2,0 -2,3.5 2,7" fill="#404040"/></svg>
<svg class="a" style="left:1337.5px;top:381.5px" width="4" height="7" viewBox="-2 0 4 7"><polygon points="-2,0 2,3.5 -2,7" fill="#404040"/></svg>
<div class="th thh" style="left:1119px;top:378px;width:49px;height:14px"></div>
<div class="a" style="left:1139.5px;top:381px;width:1px;height:8px;background:#606060;"></div>
<div class="a" style="left:1141.5px;top:381px;width:1px;height:8px;background:#606060;"></div>
<div class="a" style="left:1143.5px;top:381px;width:1px;height:8px;background:#606060;"></div>
<div class="a" style="left:1348px;top:377px;width:14px;height:16px;background:#f0f0f0;"></div>
<div class="a" style="left:1101px;top:394.5px;width:156px;height:19px;box-sizing:border-box;border:1px solid #707070;border-radius:3px;background:linear-gradient(#f2f2f2 0%,#ebebeb 48%,#dddddd 52%,#cfcfcf 100%);box-shadow:inset 0 0 0 1px #fcfcfc"></div>
<div class="u" style="left:1103px;top:396.5px;height:16px;line-height:16px;font-size:11px;color:#000;letter-spacing:0.005px;">Default (stdcall)</div>
<svg class="a" style="left:1244.5px;top:402.5px" width="7" height="4" viewBox="0 -2 7 4"><polygon points="0,-2 3.5,2 7,-2" fill="#000"/></svg>
<div class="a" style="left:1259px;top:395px;width:36px;height:18px;box-sizing:border-box;border:1px solid #abadb3;background:#fff"></div>
<div class="u" style="left:1264px;top:396.5px;height:16px;line-height:16px;font-size:11px;color:#000;letter-spacing:-0.125px;">5</div>
<div class="a" style="left:1279px;top:396px;width:15px;height:8px;box-sizing:border-box;border:1px solid #c0c0c0;background:linear-gradient(#f6f6f6,#e0e0e0)"></div>
<div class="a" style="left:1279px;top:404px;width:15px;height:8px;box-sizing:border-box;border:1px solid #c0c0c0;background:linear-gradient(#f6f6f6,#e0e0e0)"></div>
<svg class="a" style="left:1283px;top:398px" width="7" height="12" viewBox="0 0 7 12"><polygon points="0.5,3.5 3.5,0.5 6.5,3.5" fill="#3b5a99"/><polygon points="0.5,8.5 3.5,11.5 6.5,8.5" fill="#3b5a99"/></svg>
<div class="a" style="left:1298px;top:397px;width:13px;height:13px;box-sizing:border-box;border:1px solid #8e8f8f;background:#f4f4f4;box-shadow:inset 0 0 0 1px #f4f4f4, inset 0 0 0 2px #c9ccd1"></div>
<div class="u" style="left:1315.5px;top:396.5px;height:16px;line-height:16px;font-size:11px;color:#000;letter-spacing:-0.42px;">Unlocked</div>
<div class="a" style="left:1100px;top:414px;width:262px;height:71px;background:#828790;"></div>
<div class="a" style="left:1101px;top:415px;width:261px;height:69px;background:#fff8f0;"></div>
<div class="a" style="left:1101px;top:415px;width:246px;height:11px;background:#c0c0c0;"></div>
<div class="m" style="left:1106px;top:415px;">1: [esp+4] 7295D7B9</div>
<div class="m" style="left:1106px;top:426px;">2: [esp+8] FFFFFFFF</div>
<div class="m" style="left:1106px;top:437px;">3: [esp+C] 0265207C</div>
<div class="m" style="left:1106px;top:448px;">4: [esp+10] 00000000</div>
<div class="m" style="left:1106px;top:459px;">5: [esp+14] 000501BC</div>
<div class="a" style="left:1347px;top:415px;width:15px;height:69px;background:#f0f0f0;"></div>
<svg class="a" style="left:1351px;top:422px" width="7" height="4" viewBox="0 -2 7 4"><polygon points="0,2 3.5,-2 7,2" fill="#8c8c8c"/></svg>
<svg class="a" style="left:1351px;top:473px" width="7" height="4" viewBox="0 -2 7 4"><polygon points="0,-2 3.5,2 7,-2" fill="#8c8c8c"/></svg>
<div class="a" style="left:0px;top:435px;width:1099px;height:50px;background:#8a929e;"></div>
<div class="a" style="left:0px;top:436px;width:1098px;height:48px;background:#fff8f0;"></div>
<div class="m" style="left:4px;top:436px;">esp=03F6FE58</div>
<div class="m" style="left:4px;top:447px;">eax=0</div>
<div class="m" style="left:4px;top:458px;">Jump from JMP.&amp;__vbaCyMul, Call from 5039AE, 503DB5</div>
<div class="m" style="left:4px;top:469px;">.text:00401030 emu8086.exe:$1030 #1030 &lt;&amp;__vbaCyMul&gt;</div>
<div class="a" style="left:80px;top:488px;width:78px;height:22px;background:linear-gradient(#f2f2f2 0%,#ebebeb 50%,#dddddd 51%,#cfcfcf 100%);border:1px solid #8e8e8e;border-bottom:none;box-sizing:border-box"></div>
<div class="a" style="left:159.5px;top:488px;width:78.5px;height:22px;background:linear-gradient(#f2f2f2 0%,#ebebeb 50%,#dddddd 51%,#cfcfcf 100%);border:1px solid #8e8e8e;border-bottom:none;box-sizing:border-box"></div>
<div class="a" style="left:239.5px;top:488px;width:78.5px;height:22px;background:linear-gradient(#f2f2f2 0%,#ebebeb 50%,#dddddd 51%,#cfcfcf 100%);border:1px solid #8e8e8e;border-bottom:none;box-sizing:border-box"></div>
<div class="a" style="left:319.5px;top:488px;width:78.5px;height:22px;background:linear-gradient(#f2f2f2 0%,#ebebeb 50%,#dddddd 51%,#cfcfcf 100%);border:1px solid #8e8e8e;border-bottom:none;box-sizing:border-box"></div>
<div class="a" style="left:399.5px;top:488px;width:78.5px;height:22px;background:linear-gradient(#f2f2f2 0%,#ebebeb 50%,#dddddd 51%,#cfcfcf 100%);border:1px solid #8e8e8e;border-bottom:none;box-sizing:border-box"></div>
<div class="a" style="left:479.5px;top:488px;width:78.5px;height:22px;background:linear-gradient(#f2f2f2 0%,#ebebeb 50%,#dddddd 51%,#cfcfcf 100%);border:1px solid #8e8e8e;border-bottom:none;box-sizing:border-box"></div>
<div class="a" style="left:559.5px;top:488px;width:66.5px;height:22px;background:linear-gradient(#f2f2f2 0%,#ebebeb 50%,#dddddd 51%,#cfcfcf 100%);border:1px solid #8e8e8e;border-bottom:none;box-sizing:border-box"></div>
<div class="a" style="left:0px;top:486px;width:80px;height:24px;background:#fff;border:1px solid #8e8e8e;border-bottom:none;border-left:none;box-sizing:border-box"></div>
<svg class="a" style="left:10px;top:489px" width="16" height="16" viewBox="0 0 16 16"><rect x="4.6" y="2.3" width="11.2" height="10" rx="1.3" fill="url(#gTk)" stroke="#b4b4b4" stroke-width=".5"/><rect x="4.6" y="7" width="11.2" height="5.3" fill="#c8d4e8" opacity=".25"/><path d="M0 12.3V5.2Q0 4.1 1.1 4.1H4.9V12.3z" fill="url(#gCab)" stroke="#d88c10" stroke-width=".4"/><rect x="0" y="6.3" width="2.9" height="3.4" fill="#4a86c8"/><rect x=".9" y="7" width=".8" height="2" fill="#8fb8e6"/><rect x="4.9" y="12" width="7" height=".9" fill="#5a5a5a"/><circle cx="2.9" cy="13.2" r="2.1" fill="#2a1c1c"/><circle cx="2.9" cy="13.2" r=".95" fill="#d4dada"/><circle cx="13" cy="13.2" r="2.1" fill="#2a1c1c"/><circle cx="13" cy="13.2" r=".95" fill="#d4dada"/></svg>
<svg class="a" style="left:90px;top:490px" width="16" height="16" viewBox="0 0 16 16"><rect x="4.6" y="2.3" width="11.2" height="10" rx="1.3" fill="url(#gTk)" stroke="#b4b4b4" stroke-width=".5"/><rect x="4.6" y="7" width="11.2" height="5.3" fill="#c8d4e8" opacity=".25"/><path d="M0 12.3V5.2Q0 4.1 1.1 4.1H4.9V12.3z" fill="url(#gCab)" stroke="#d88c10" stroke-width=".4"/><rect x="0" y="6.3" width="2.9" height="3.4" fill="#4a86c8"/><rect x=".9" y="7" width=".8" height="2" fill="#8fb8e6"/><rect x="4.9" y="12" width="7" height=".9" fill="#5a5a5a"/><circle cx="2.9" cy="13.2" r="2.1" fill="#2a1c1c"/><circle cx="2.9" cy="13.2" r=".95" fill="#d4dada"/><circle cx="13" cy="13.2" r="2.1" fill="#2a1c1c"/><circle cx="13" cy="13.2" r=".95" fill="#d4dada"/></svg>
<svg class="a" style="left:170px;top:490px" width="16" height="16" viewBox="0 0 16 16"><rect x="4.6" y="2.3" width="11.2" height="10" rx="1.3" fill="url(#gTk)" stroke="#b4b4b4" stroke-width=".5"/><rect x="4.6" y="7" width="11.2" height="5.3" fill="#c8d4e8" opacity=".25"/><path d="M0 12.3V5.2Q0 4.1 1.1 4.1H4.9V12.3z" fill="url(#gCab)" stroke="#d88c10" stroke-width=".4"/><rect x="0" y="6.3" width="2.9" height="3.4" fill="#4a86c8"/><rect x=".9" y="7" width=".8" height="2" fill="#8fb8e6"/><rect x="4.9" y="12" width="7" height=".9" fill="#5a5a5a"/><circle cx="2.9" cy="13.2" r="2.1" fill="#2a1c1c"/><circle cx="2.9" cy="13.2" r=".95" fill="#d4dada"/><circle cx="13" cy="13.2" r="2.1" fill="#2a1c1c"/><circle cx="13" cy="13.2" r=".95" fill="#d4dada"/></svg>
<svg class="a" style="left:250px;top:490px" width="16" height="16" viewBox="0 0 16 16"><rect x="4.6" y="2.3" width="11.2" height="10" rx="1.3" fill="url(#gTk)" stroke="#b4b4b4" stroke-width=".5"/><rect x="4.6" y="7" width="11.2" height="5.3" fill="#c8d4e8" opacity=".25"/><path d="M0 12.3V5.2Q0 4.1 1.1 4.1H4.9V12.3z" fill="url(#gCab)" stroke="#d88c10" stroke-width=".4"/><rect x="0" y="6.3" width="2.9" height="3.4" fill="#4a86c8"/><rect x=".9" y="7" width=".8" height="2" fill="#8fb8e6"/><rect x="4.9" y="12" width="7" height=".9" fill="#5a5a5a"/><circle cx="2.9" cy="13.2" r="2.1" fill="#2a1c1c"/><circle cx="2.9" cy="13.2" r=".95" fill="#d4dada"/><circle cx="13" cy="13.2" r="2.1" fill="#2a1c1c"/><circle cx="13" cy="13.2" r=".95" fill="#d4dada"/></svg>
<svg class="a" style="left:330px;top:490px" width="16" height="16" viewBox="0 0 16 16"><rect x="4.6" y="2.3" width="11.2" height="10" rx="1.3" fill="url(#gTk)" stroke="#b4b4b4" stroke-width=".5"/><rect x="4.6" y="7" width="11.2" height="5.3" fill="#c8d4e8" opacity=".25"/><path d="M0 12.3V5.2Q0 4.1 1.1 4.1H4.9V12.3z" fill="url(#gCab)" stroke="#d88c10" stroke-width=".4"/><rect x="0" y="6.3" width="2.9" height="3.4" fill="#4a86c8"/><rect x=".9" y="7" width=".8" height="2" fill="#8fb8e6"/><rect x="4.9" y="12" width="7" height=".9" fill="#5a5a5a"/><circle cx="2.9" cy="13.2" r="2.1" fill="#2a1c1c"/><circle cx="2.9" cy="13.2" r=".95" fill="#d4dada"/><circle cx="13" cy="13.2" r="2.1" fill="#2a1c1c"/><circle cx="13" cy="13.2" r=".95" fill="#d4dada"/></svg>
<div class="u" style="left:29.5px;top:490.5px;height:16px;line-height:16px;font-size:11px;color:#000;letter-spacing:-0.422px;">Dump 1</div>
<div class="u" style="left:109.3px;top:491.5px;height:16px;line-height:16px;font-size:11px;color:#000;letter-spacing:-0.255px;">Dump 2</div>
<div class="u" style="left:189.5px;top:491.5px;height:16px;line-height:16px;font-size:11px;color:#000;letter-spacing:-0.255px;">Dump 3</div>
<div class="u" style="left:269.5px;top:491.5px;height:16px;line-height:16px;font-size:11px;color:#000;letter-spacing:-0.255px;">Dump 4</div>
<div class="u" style="left:349.5px;top:491.5px;height:16px;line-height:16px;font-size:11px;color:#000;letter-spacing:-0.255px;">Dump 5</div>
<div class="a" style="left:0px;top:510px;width:826px;height:103px;background:#9a9fa8;"></div>
<div class="a" style="left:0px;top:511px;width:825px;height:101px;background:#fff8f0;"></div>
<div class="a" style="left:0px;top:511px;width:806px;height:14px;background:#c0c0c0;"></div>
<div class="a" style="left:0px;top:525px;width:806px;height:1px;background:#a0a0a0;"></div>
<div class="a" style="left:61px;top:511px;width:1px;height:14px;background:#909090;"></div>
<div class="a" style="left:62px;top:511px;width:1px;height:14px;background:#808080;"></div>
<div class="a" style="left:0px;top:524px;width:806px;height:1px;background:#a8a8a8;"></div>
<div class="m" style="left:4px;top:513px;">Address</div>
<div class="m" style="left:68px;top:513px;">Hex</div>
<div class="a" style="left:63px;top:526px;width:20.5px;height:11px;background:#c0c0c0;"></div>
<div class="a" style="left:0;top:526px;width:806px;height:86px;overflow:hidden">
<div class="m" style="left:3px;top:0px;color:#ff0000;">75680000</div>
<div class="m" style="left:67.8px;top:0px;">18 FA 8A <span style="color:#800080;">77</span></div>
<div class="a" style="left:67px;top:9px;width:77.5px;height:2px;background:#ff0000;"></div>
<div class="m" style="left:151.8px;top:0px;">AA 89 8D <span style="color:#800080;">77</span></div>
<div class="a" style="left:151px;top:9px;width:77.5px;height:2px;background:#ff0000;"></div>
<div class="m" style="left:235.8px;top:0px;">A6 86 8C <span style="color:#800080;">77</span></div>
<div class="a" style="left:235px;top:9px;width:77.5px;height:2px;background:#ff0000;"></div>
<div class="m" style="left:319.8px;top:0px;"><span style="color:#800080;">3C</span> FD 8A <span style="color:#800080;">77</span></div>
<div class="a" style="left:319px;top:9px;width:77.5px;height:2px;background:#ff0000;"></div>
<div class="m" style="left:404.8px;top:0px;">...<span style="color:#800080;">.</span></div>
<div class="m" style="left:3px;top:11px;color:#ff0000;">75680010</div>
<div class="m" style="left:67.8px;top:11px;"><span style="color:#800080;">6F</span> B0 8E <span style="color:#800080;">77</span></div>
<div class="a" style="left:67px;top:20px;width:77.5px;height:2px;background:#ff0000;"></div>
<div class="m" style="left:151.8px;top:11px;">85 DF 8B <span style="color:#800080;">77</span></div>
<div class="a" style="left:151px;top:20px;width:77.5px;height:2px;background:#ff0000;"></div>
<div class="m" style="left:235.8px;top:11px;"><span style="color:#800080;">26</span> E0 8B <span style="color:#800080;">77</span></div>
<div class="a" style="left:235px;top:20px;width:77.5px;height:2px;background:#ff0000;"></div>
<div class="m" style="left:319.8px;top:11px;"><span style="color:#800080;">40</span> <span style="color:#800080;">23</span> 8B <span style="color:#800080;">77</span></div>
<div class="a" style="left:319px;top:20px;width:77.5px;height:2px;background:#ff0000;"></div>
<div class="m" style="left:3px;top:22px;color:#ff0000;">75680020</div>
<div class="m" style="left:67.8px;top:22px;"><span style="color:#800080;">20</span> DF 8B <span style="color:#800080;">77</span></div>
<div class="a" style="left:67px;top:31px;width:77.5px;height:2px;background:#ff0000;"></div>
<div class="m" style="left:151.8px;top:22px;">B0 <span style="color:#800080;">22</span> 8B <span style="color:#800080;">77</span></div>
<div class="a" style="left:151px;top:31px;width:77.5px;height:2px;background:#ff0000;"></div>
<div class="m" style="left:235.8px;top:22px;"><span style="color:#800080;">70</span> <span style="color:#800080;">22</span> 8B <span style="color:#800080;">77</span></div>
<div class="a" style="left:235px;top:31px;width:77.5px;height:2px;background:#ff0000;"></div>
<div class="m" style="left:319.8px;top:22px;"><span style="color:#800080;">2E</span> <span style="color:#800080;">69</span> 8B <span style="color:#800080;">77</span></div>
<div class="a" style="left:319px;top:31px;width:77.5px;height:2px;background:#ff0000;"></div>
<div class="m" style="left:3px;top:33px;color:#ff0000;">75680030</div>
<div class="m" style="left:67.8px;top:33px;"><span style="color:#800080;">45</span> E5 8B <span style="color:#800080;">77</span></div>
<div class="a" style="left:67px;top:42px;width:77.5px;height:2px;background:#ff0000;"></div>
<div class="m" style="left:151.8px;top:33px;"><span style="color:#800080;">43</span> BB 8C <span style="color:#800080;">77</span></div>
<div class="a" style="left:151px;top:42px;width:77.5px;height:2px;background:#ff0000;"></div>
<div class="m" style="left:235.8px;top:33px;"><span style="color:#800080;">78</span> EC 8B <span style="color:#800080;">77</span></div>
<div class="a" style="left:235px;top:42px;width:77.5px;height:2px;background:#ff0000;"></div>
<div class="m" style="left:319.8px;top:33px;"><span style="color:#800080;">59</span> <span style="color:#800080;">21</span> 8B <span style="color:#800080;">77</span></div>
<div class="a" style="left:319px;top:42px;width:77.5px;height:2px;background:#ff0000;"></div>
<div class="m" style="left:3px;top:44px;color:#ff0000;">75680040</div>
<div class="m" style="left:67.8px;top:44px;">F1 <span style="color:#800080;">21</span> 8B <span style="color:#800080;">77</span></div>
<div class="a" style="left:67px;top:53px;width:77.5px;height:2px;background:#ff0000;"></div>
<div class="m" style="left:151.8px;top:44px;">CA B4 8D <span style="color:#800080;">77</span></div>
<div class="a" style="left:151px;top:53px;width:77.5px;height:2px;background:#ff0000;"></div>
<div class="m" style="left:235.8px;top:44px;">C8 FA 8A <span style="color:#800080;">77</span></div>
<div class="a" style="left:235px;top:53px;width:77.5px;height:2px;background:#ff0000;"></div>
<div class="m" style="left:319.8px;top:44px;">18 15 8B <span style="color:#800080;">77</span></div>
<div class="a" style="left:319px;top:53px;width:77.5px;height:2px;background:#ff0000;"></div>
<div class="m" style="left:404.8px;top:44px;">ñ<span style="color:#800080;">!</span>.<span style="color:#800080;">w</span>Ê´.<span style="color:#800080;">w</span>Èú.<span style="color:#800080;">w</span>...<span style="color:#800080;">w</span></div>
<div class="m" style="left:3px;top:55px;color:#ff0000;">75680050</div>
<div class="m" style="left:67.8px;top:55px;">8C 1B 8B <span style="color:#800080;">77</span></div>
<div class="a" style="left:67px;top:64px;width:77.5px;height:2px;background:#ff0000;"></div>
<div class="m" style="left:151.8px;top:55px;"><span style="color:#800080;">26</span> E1 8B <span style="color:#800080;">77</span></div>
<div class="a" style="left:151px;top:64px;width:77.5px;height:2px;background:#ff0000;"></div>
<div class="m" style="left:235.8px;top:55px;">B5 E6 8B <span style="color:#800080;">77</span></div>
<div class="a" style="left:235px;top:64px;width:77.5px;height:2px;background:#ff0000;"></div>
<div class="m" style="left:319.8px;top:55px;">D0 E1 8B <span style="color:#800080;">77</span></div>
<div class="a" style="left:319px;top:64px;width:77.5px;height:2px;background:#ff0000;"></div>
<div class="m" style="left:404.8px;top:55px;">...<span style="color:#800080;">w</span><span style="color:#800080;">&amp;</span>á.<span style="color:#800080;">w</span>µæ.<span style="color:#800080;">w</span>Ðá.<span style="color:#800080;">w</span></div>
<div class="m" style="left:3px;top:66px;color:#ff0000;">75680060</div>
<div class="m" style="left:67.8px;top:66px;">FC 83 8C <span style="color:#800080;">77</span></div>
<div class="a" style="left:67px;top:75px;width:77.5px;height:2px;background:#ff0000;"></div>
<div class="m" style="left:151.8px;top:66px;">FA <span style="color:#800080;">23</span> 8D <span style="color:#800080;">77</span></div>
<div class="a" style="left:151px;top:75px;width:77.5px;height:2px;background:#ff0000;"></div>
<div class="m" style="left:235.8px;top:66px;">93 EF 8D <span style="color:#800080;">77</span></div>
<div class="a" style="left:235px;top:75px;width:77.5px;height:2px;background:#ff0000;"></div>
<div class="m" style="left:319.8px;top:66px;">D8 1E 8B <span style="color:#800080;">77</span></div>
<div class="a" style="left:319px;top:75px;width:77.5px;height:2px;background:#ff0000;"></div>
<div class="m" style="left:404.8px;top:66px;">ü..<span style="color:#800080;">w</span>ú<span style="color:#800080;">#</span>.<span style="color:#800080;">w</span>.ï.<span style="color:#800080;">w</span>Ø..<span style="color:#800080;">w</span></div>
<div class="m" style="left:3px;top:77px;color:#ff0000;">75680070</div>
<div class="m" style="left:67.8px;top:77px;">16 <span style="color:#800080;">58</span> 96 <span style="color:#800080;">77</span></div>
<div class="m" style="left:151.8px;top:77px;">EC <span style="color:#008000;">00</span> 8B <span style="color:#800080;">77</span></div>
<div class="m" style="left:235.8px;top:77px;"><span style="color:#800080;">34</span> <span style="color:#800080;">0A</span> 8B <span style="color:#800080;">77</span></div>
<div class="m" style="left:319.8px;top:77px;">B4 01 8B <span style="color:#800080;">77</span></div>
<div class="m" style="left:404.8px;top:77px;">.<span style="color:#800080;">X</span>.<span style="color:#800080;">w</span>ì<span style="color:#008000;">.</span>.<span style="color:#800080;">w</span><span style="color:#800080;">4</span><span style="color:#800080;">.</span>.<span style="color:#800080;">w</span>´..<span style="color:#800080;">w</span></div>
</div>
<div class="a" style="left:62px;top:526px;width:1px;height:86px;background:#808080;"></div>
<div class="a" style="left:147px;top:526px;width:1px;height:86px;background:#808080;"></div>
<div class="a" style="left:231px;top:526px;width:1px;height:86px;background:#808080;"></div>
<div class="a" style="left:316px;top:526px;width:1px;height:86px;background:#808080;"></div>
<div class="a" style="left:399px;top:526px;width:1px;height:86px;background:#808080;"></div>
<div class="a" style="left:519px;top:526px;width:1px;height:86px;background:#808080;"></div>
<div class="a" style="left:807px;top:511px;width:18px;height:101px;background:#f0f0f0;"></div>
<svg class="a" style="left:812.5px;top:518px" width="7" height="4" viewBox="0 -2 7 4"><polygon points="0,2 3.5,-2 7,2" fill="#404040"/></svg>
<svg class="a" style="left:812.5px;top:601px" width="7" height="4" viewBox="0 -2 7 4"><polygon points="0,-2 3.5,2 7,-2" fill="#404040"/></svg>
<div class="th thv" style="left:808px;top:529.5px;width:16px;height:15.5px"></div>
<div class="a" style="left:826px;top:486px;width:536px;height:127px;background:#828790;"></div>
<div class="a" style="left:827px;top:487px;width:535px;height:125px;background:#fff8f0;"></div>
<div class="a" style="left:827px;top:487px;width:520px;height:11px;background:#c0c0c0;"></div>
<div class="a" style="left:827px;top:487px;width:64px;height:11px;background:#000;"></div>
<div class="a" style="left:827px;top:487px;width:520px;height:110px;overflow:hidden">
<div class="m" style="left:4.8px;top:0px;color:#fff;">02A4FDF4</div>
<div class="m" style="left:68.8px;top:0px;">778B014D</div>
<div class="m" style="left:134.6px;top:0px;color:#ff0000;">return to ntdll.778B014D from ???</div>
<div class="m" style="left:4.8px;top:11px;color:#808080;">02A4FDF8</div>
<div class="m" style="left:68.8px;top:11px;">778D431F</div>
<div class="m" style="left:134.6px;top:11px;color:#ff0000;">return to ntdll.778D431F from ntdll.778B0138</div>
<div class="m" style="left:4.8px;top:22px;color:#808080;">02A4FDFC</div>
<div class="m" style="left:68.8px;top:22px;">00000003</div>
<div class="m" style="left:4.8px;top:33px;color:#808080;">02A4FE00</div>
<div class="m" style="left:68.8px;top:33px;">00342EB0</div>
<div class="m" style="left:4.8px;top:44px;color:#808080;">02A4FE04</div>
<div class="m" style="left:68.8px;top:44px;">00000001</div>
<div class="m" style="left:4.8px;top:55px;color:#808080;">02A4FE08</div>
<div class="m" style="left:68.8px;top:55px;">00000001</div>
<div class="m" style="left:4.8px;top:66px;color:#808080;">02A4FE0C</div>
<div class="m" style="left:68.8px;top:66px;">00000000</div>
<div class="m" style="left:4.8px;top:77px;color:#808080;">02A4FE10</div>
<div class="m" style="left:68.8px;top:77px;">75214006</div>
<div class="m" style="left:4.8px;top:88px;color:#808080;">02A4FE14</div>
<div class="m" style="left:68.8px;top:88px;">00000000</div>
<div class="m" style="left:4.8px;top:99px;color:#808080;">02A4FE18</div>
<div class="m" style="left:68.8px;top:99px;">00000000</div>
</div>
<div class="a" style="left:890px;top:487px;width:1px;height:110px;background:#808080;"></div>
<div class="a" style="left:956px;top:487px;width:1px;height:110px;background:#808080;"></div>
<div class="a" style="left:1347px;top:487px;width:15px;height:110px;background:#f0f0f0;"></div>
<svg class="a" style="left:1351px;top:494px" width="7" height="4" viewBox="0 -2 7 4"><polygon points="0,2 3.5,-2 7,2" fill="#404040"/></svg>
<svg class="a" style="left:1351px;top:584.5px" width="7" height="4" viewBox="0 -2 7 4"><polygon points="0,-2 3.5,2 7,-2" fill="#404040"/></svg>
<div class="th thv" style="left:1348px;top:505px;width:13px;height:15.5px"></div>
<div class="a" style="left:827px;top:597px;width:520px;height:15px;background:#f0f0f0;"></div>
<svg class="a" style="left:833px;top:601px" width="4" height="7" viewBox="-2 0 4 7"><polygon points="2,0 -2,3.5 2,7" fill="#404040"/></svg>
<svg class="a" style="left:1336px;top:601px" width="4" height="7" viewBox="-2 0 4 7"><polygon points="-2,0 2,3.5 -2,7" fill="#404040"/></svg>
<div class="th thh" style="left:845.5px;top:598px;width:136.5px;height:13px"></div>
<div class="a" style="left:909.75px;top:601px;width:1px;height:7px;background:#606060;"></div>
<div class="a" style="left:911.75px;top:601px;width:1px;height:7px;background:#606060;"></div>
<div class="a" style="left:913.75px;top:601px;width:1px;height:7px;background:#606060;"></div>
<div class="a" style="left:1347px;top:597px;width:15px;height:15px;background:#f0f0f0;"></div>
<div class="a" style="left:0px;top:613px;width:1362px;height:24px;background:#f0f0f0;"></div>
<div class="u" style="left:0.5px;top:618px;height:16px;line-height:16px;font-size:11px;color:#000;letter-spacing:-0.725px;">Command:</div>
<div class="a" style="left:54px;top:615px;width:1234px;height:20px;box-sizing:border-box;border:1px solid #e3e9ef;border-top-color:#abadb3;background:#fff"></div>
<div class="c" style="left:58px;top:621px;color:#a0a0a0">Commands are comma separated (like assembly instructions): mov eax, ebx</div>
<div class="a" style="left:1289.5px;top:615.5px;width:72px;height:19.5px;box-sizing:border-box;border:1px solid #707070;border-radius:3px;background:linear-gradient(#f2f2f2 0%,#ebebeb 48%,#dddddd 52%,#cfcfcf 100%);box-shadow:inset 0 0 0 1px #fcfcfc"></div>
<div class="u" style="left:1292.7px;top:617.5px;height:16px;line-height:16px;font-size:11px;color:#000;letter-spacing:0.092px;">Default</div>
<svg class="a" style="left:1350px;top:623.5px" width="7" height="4" viewBox="0 -2 7 4"><polygon points="0,-2 3.5,2 7,-2" fill="#000"/></svg>
<div class="a" style="left:0px;top:637px;width:1362px;height:22px;background:#c8c8c8;"></div>
<div class="a" style="left:0px;top:637px;width:1362px;height:1px;background:#b4b4b4;"></div>
<div class="a" style="left:0px;top:659px;width:1362px;height:2px;background:#4f5862;"></div>
<div class="a" style="left:1px;top:640px;width:62px;height:18px;background:#c0c0c0;border:1px solid #a4a4a4;box-sizing:border-box"></div>
<div class="u" style="left:11px;top:641.5px;height:16px;line-height:16px;font-size:11px;color:#000;letter-spacing:-0.283px;">Running</div>
<div class="a" style="left:70px;top:640px;width:1102px;height:18px;background:#c0c0c0;border:1px solid #a4a4a4;box-sizing:border-box"></div>
<div class="u" style="left:73.7px;top:641.5px;height:16px;line-height:16px;font-size:11px;color:#000;letter-spacing:0.007px;">emu8086.exe: 00401030 -&gt; 00401030 (0x00000001 bytes)</div>
<div class="a" style="left:1179px;top:640px;width:183px;height:18px;background:#c0c0c0;border:1px solid #a4a4a4;box-sizing:border-box"></div>
<div class="u" style="left:1183px;top:641.5px;height:16px;line-height:16px;font-size:11px;color:#000;letter-spacing:-0.087px;">Time Wasted Debugging: 0:02:36:49</div>
<div class="a" style="left:355px;top:5px;width:263px;height:570px;box-sizing:border-box;background:#f0f0f0;border:1px solid #979797;box-shadow:2px 2px 2px rgba(0,0,0,.5)"></div>
<div class="a" style="left:384px;top:8px;width:1px;height:564px;background:#e2e3e3;"></div>
<div class="a" style="left:385px;top:8px;width:1px;height:564px;background:#fff;"></div>
<svg class="a" style="will-change:transform;left:361px;top:11px" width="16" height="16" viewBox="0 0 16 16"><path d="M2.4.6H10.4L13.6 3.8V15.2H2.4z" fill="url(#gPg)" stroke="#7da0cc" stroke-width=".8"/><path d="M10.4.6V3.8H13.6z" fill="#f4f9ff" stroke="#7da0cc" stroke-width=".6"/><text x="8" y="8.4" font-family="Liberation Serif,serif" font-size="5.4" text-anchor="middle" fill="#2a3040">01</text><text x="8" y="13.6" font-family="Liberation Serif,serif" font-size="5.4" text-anchor="middle" fill="#2a3040">10</text></svg>
<div class="u" style="left:389.5px;top:11.5px;height:16px;line-height:16px;font-size:11px;color:#000;letter-spacing:-0.24px;">Binary</div>
<svg class="a" style="left:599px;top:15px" width="4" height="7" viewBox="-2 0 4 7"><polygon points="-2,0 2,3.5 -2,7" fill="#000"/></svg>
<svg class="a" style="left:361px;top:33px" width="16" height="16" viewBox="0 0 16 16"><path d="M1.2 0.6H7L10 3.6V11.6H1.2z" fill="url(#gW)" stroke="#8fa39f" stroke-width=".8"/><path d="M7 0.6V3.6H10" fill="#fff" stroke="#8fa39f" stroke-width=".6"/><path d="M6.2 4.4H12.2L15.2 7.4V15.6H6.2z" fill="url(#gW)" stroke="#8fa39f" stroke-width=".8"/><path d="M12.2 4.4V7.4H15.2" fill="#fff" stroke="#8fa39f" stroke-width=".6"/></svg>
<div class="u" style="left:389.5px;top:33.5px;height:16px;line-height:16px;font-size:11px;color:#000;letter-spacing:-0.234px;">Copy</div>
<svg class="a" style="left:599px;top:37px" width="4" height="7" viewBox="-2 0 4 7"><polygon points="-2,0 2,3.5 -2,7" fill="#000"/></svg>
<svg class="a" style="left:361px;top:55px" width="16" height="16" viewBox="0 0 16 16"><circle cx="7.5" cy="7.5" r="3.7" fill="url(#gR)"/><ellipse cx="6.8" cy="6" rx="1.8" ry="1" fill="#fff" opacity=".25"/></svg>
<div class="u" style="left:389.5px;top:55.5px;height:16px;line-height:16px;font-size:11px;color:#000;letter-spacing:-0.134px;">Breakpoint</div>
<svg class="a" style="left:599px;top:59px" width="4" height="7" viewBox="-2 0 4 7"><polygon points="-2,0 2,3.5 -2,7" fill="#000"/></svg>
<svg class="a" style="left:361px;top:77px" width="16" height="16" viewBox="0 0 16 16"><rect x="4.6" y="2.3" width="11.2" height="10" rx="1.3" fill="url(#gTk)" stroke="#b4b4b4" stroke-width=".5"/><rect x="4.6" y="7" width="11.2" height="5.3" fill="#c8d4e8" opacity=".25"/><path d="M0 12.3V5.2Q0 4.1 1.1 4.1H4.9V12.3z" fill="url(#gCab)" stroke="#d88c10" stroke-width=".4"/><rect x="0" y="6.3" width="2.9" height="3.4" fill="#4a86c8"/><rect x=".9" y="7" width=".8" height="2" fill="#8fb8e6"/><rect x="4.9" y="12" width="7" height=".9" fill="#5a5a5a"/><circle cx="2.9" cy="13.2" r="2.1" fill="#2a1c1c"/><circle cx="2.9" cy="13.2" r=".95" fill="#d4dada"/><circle cx="13" cy="13.2" r="2.1" fill="#2a1c1c"/><circle cx="13" cy="13.2" r=".95" fill="#d4dada"/></svg>
<div class="u" style="left:389.5px;top:77.5px;height:16px;line-height:16px;font-size:11px;color:#000;letter-spacing:-0.344px;">Follow in Dump</div>
<svg class="a" style="left:599px;top:81px" width="4" height="7" viewBox="-2 0 4 7"><polygon points="-2,0 2,3.5 -2,7" fill="#000"/></svg>
<svg class="a" style="left:361px;top:99px" width="16" height="16" viewBox="0 0 16 16"><rect x=".4" y=".4" width="14.2" height="14.2" rx="1.2" fill="#2f9a3a" stroke="#1f7a28" stroke-width=".8"/><rect x="1" y="1" width="13" height="5.5" rx=".8" fill="#52b85a" opacity=".45"/><rect x="3.05" y="2.2" width=".9" height="2.2" fill="#f1e08a"/><rect x="3.05" y="10.6" width=".9" height="2.2" fill="#f1e08a"/><rect x="5.05" y="2.2" width=".9" height="2.2" fill="#f1e08a"/><rect x="5.05" y="10.6" width=".9" height="2.2" fill="#f1e08a"/><rect x="7.05" y="2.2" width=".9" height="2.2" fill="#f1e08a"/><rect x="7.05" y="10.6" width=".9" height="2.2" fill="#f1e08a"/><rect x="9.05" y="2.2" width=".9" height="2.2" fill="#f1e08a"/><rect x="9.05" y="10.6" width=".9" height="2.2" fill="#f1e08a"/><rect x="11.05" y="2.2" width=".9" height="2.2" fill="#f1e08a"/><rect x="11.05" y="10.6" width=".9" height="2.2" fill="#f1e08a"/><rect x="1.3" y="4.15" width="2.2" height=".9" fill="#f1e08a"/><rect x="11.5" y="4.15" width="2.2" height=".9" fill="#f1e08a"/><rect x="1.3" y="6.05" width="2.2" height=".9" fill="#f1e08a"/><rect x="11.5" y="6.05" width="2.2" height=".9" fill="#f1e08a"/><rect x="1.3" y="7.95" width="2.2" height=".9" fill="#f1e08a"/><rect x="11.5" y="7.95" width="2.2" height=".9" fill="#f1e08a"/><rect x="1.3" y="9.85" width="2.2" height=".9" fill="#f1e08a"/><rect x="11.5" y="9.85" width="2.2" height=".9" fill="#f1e08a"/><circle cx="1.6" cy="1.6" r=".65" fill="#f1e08a"/><circle cx="13.4" cy="1.6" r=".65" fill="#f1e08a"/><circle cx="1.6" cy="13.4" r=".65" fill="#f1e08a"/><circle cx="13.4" cy="13.4" r=".65" fill="#f1e08a"/><rect x="3.2" y="4.2" width="8.6" height="6.6" rx=".7" fill="#2e2e30"/><rect x="4" y="5" width="7" height="2.4" fill="#4c4c50"/></svg>
<div class="u" style="left:389.5px;top:99.5px;height:16px;line-height:16px;font-size:11px;color:#000;letter-spacing:-0.334px;">Follow in Disassembler</div>
<svg class="a" style="left:599px;top:103px" width="4" height="7" viewBox="-2 0 4 7"><polygon points="-2,0 2,3.5 -2,7" fill="#000"/></svg>
<svg class="a" style="left:361px;top:121px" width="16" height="16" viewBox="0 0 16 16"><rect x=".4" y="1" width="14.8" height="7" fill="#3fa744" stroke="#2a7d2e" stroke-width=".7"/><rect x="2.2" y="2.2" width="3.2" height="3.2" fill="#30383a"/><rect x="6.2" y="2.2" width="3.2" height="3.2" fill="#30383a"/><rect x="10.2" y="2.2" width="3.2" height="3.2" fill="#30383a"/><rect x="1.4" y="6.4" width="1" height="1.6" fill="#e8d878"/><rect x="3.4" y="6.4" width="1" height="1.6" fill="#e8d878"/><rect x="5.4" y="6.4" width="1" height="1.6" fill="#e8d878"/><rect x="7.4" y="6.4" width="1" height="1.6" fill="#e8d878"/><rect x="9.4" y="6.4" width="1" height="1.6" fill="#e8d878"/><rect x="11.4" y="6.4" width="1" height="1.6" fill="#e8d878"/><rect x="13.4" y="6.4" width="1" height="1.6" fill="#e8d878"/><circle cx="4.6" cy="11.8" r="2.1" fill="#dfeefa" stroke="#8fa0b4" stroke-width=".9"/><path d="M3 13.4L.8 15.6" stroke="#8fa0b4" stroke-width="1.3" stroke-linecap="round"/><circle cx="12" cy="12.6" r="3" fill="#fff" stroke="#202020" stroke-width=".8"/><circle cx="12" cy="12.6" r="1.1" fill="none" stroke="#202020" stroke-width=".7"/><path d="M13.1 11.6V13.4Q13.6 14 14.4 13.4" fill="none" stroke="#202020" stroke-width=".6"/></svg>
<div class="u" style="left:389.5px;top:121.5px;height:16px;line-height:16px;font-size:11px;color:#000;letter-spacing:-0.27px;">Follow in Memory Map</div>
<svg class="a" style="left:361px;top:143px" width="16" height="16" viewBox="0 0 16 16"><rect x="6.6" y="10" width="2.6" height="4.6" fill="#a8683a"/><path d="M4.4 15Q8 13.4 11.6 15z" fill="#c89060"/><g fill="#3f9d45" stroke="#2c7a33" stroke-width=".5"><circle cx="4" cy="8" r="3.4"/><circle cx="12" cy="8" r="3.4"/><circle cx="8" cy="4" r="3.6"/><circle cx="5.4" cy="4.6" r="2.6"/><circle cx="10.8" cy="4.8" r="2.6"/><circle cx="8" cy="8.8" r="3.4"/></g><g fill="#62bf62"><circle cx="7" cy="3.6" r="1.8"/><circle cx="4" cy="7" r="1.6"/><circle cx="10.6" cy="6.6" r="1.8"/></g></svg>
<div class="u" style="left:389.5px;top:143.5px;height:16px;line-height:16px;font-size:11px;color:#000;letter-spacing:-0.366px;">Graph</div>
<div class="u" style="left:531.5px;top:143.5px;height:16px;line-height:16px;font-size:11px;color:#000;letter-spacing:-1.562px;">G</div>
<svg class="a" style="left:361px;top:165px" width="16" height="16" viewBox="0 0 16 16"><circle cx="8" cy="8" r="7.3" fill="none" stroke="#d9b88a" stroke-width=".7"/><circle cx="8" cy="8" r="5" fill="none" stroke="#e13a2e" stroke-width="4"/><g stroke="#fff" stroke-width="3.2"><path d="M3.2 3.2L5.4 5.4M12.8 3.2L10.6 5.4M3.2 12.8L5.4 10.6M12.8 12.8L10.6 10.6"/></g><circle cx="8" cy="8" r="7" fill="none" stroke="#b8281e" stroke-width=".5"/><circle cx="8" cy="8" r="3" fill="none" stroke="#b8281e" stroke-width=".5"/></svg>
<div class="u" style="left:389.5px;top:165.5px;height:16px;line-height:16px;font-size:11px;color:#000;letter-spacing:-0.381px;">Help on Symbolic Name</div>
<svg class="a" style="left:599px;top:169px" width="4" height="7" viewBox="-2 0 4 7"><polygon points="-2,0 2,3.5 -2,7" fill="#000"/></svg>
<svg class="a" style="will-change:transform;left:361px;top:187px" width="16" height="16" viewBox="0 0 16 16"><path d="M3 1H13.4V14.6H3.6Q2.6 14.6 2.6 13.6V1.4z" fill="#4f84c8" stroke="#2f5c9c" stroke-width=".7"/><path d="M2.8 1.2V14" stroke="#2f5c9c" stroke-width="1.4"/><path d="M3.4 14.8H13.4" stroke="#dfe6f0" stroke-width="1"/><text x="8.6" y="11.6" font-family="Liberation Sans,sans-serif" font-weight="bold" font-size="10" text-anchor="middle" fill="#fff">?</text></svg>
<div class="u" style="left:389.5px;top:187.5px;height:16px;line-height:16px;font-size:11px;color:#000;letter-spacing:-0.345px;">Help on mnemonic</div>
<div class="u" style="left:531.5px;top:187.5px;height:16px;line-height:16px;font-size:11px;color:#000;letter-spacing:0.161px;">Ctrl+F1</div>
<svg class="a" style="left:361px;top:209px" width="16" height="16" viewBox="0 0 16 16"><ellipse cx="8" cy="8.6" rx="5.8" ry="6.4" fill="#1c1c1c"/><ellipse cx="8" cy="4.6" rx="3.8" ry="3.8" fill="#1c1c1c"/><path d="M2.6 7.4L.6 10.6L3 10z M13.4 7.4L15.6 10.6L13 10z" fill="#1c1c1c"/><ellipse cx="8" cy="10" rx="3.8" ry="4.2" fill="#fff"/><ellipse cx="6.6" cy="4.8" rx="1.3" ry="1.6" fill="#fff"/><ellipse cx="9.4" cy="4.8" rx="1.3" ry="1.6" fill="#fff"/><circle cx="6.9" cy="5" r=".6" fill="#000"/><circle cx="9.1" cy="5" r=".6" fill="#000"/><path d="M6.4 6.4Q8 5.6 9.6 6.4L8 7.8z" fill="#f2a41c"/><ellipse cx="4.6" cy="14.2" rx="2.4" ry="1.2" fill="#f2a41c"/><ellipse cx="11.4" cy="14.2" rx="2.4" ry="1.2" fill="#f2a41c"/></svg>
<div class="u" style="left:389.5px;top:209.5px;height:16px;line-height:16px;font-size:11px;color:#000;letter-spacing:-0.22px;">Show mnemonic brief</div>
<div class="u" style="left:531.5px;top:209.5px;height:16px;line-height:16px;font-size:11px;color:#000;letter-spacing:0.222px;">Ctrl+Shift+F1</div>
<svg class="a" style="left:361px;top:231px" width="16" height="16" viewBox="0 0 16 16"><path d="M12.4.8L14.4 2.8L7.6 10.4L5 8z" fill="#f2e620" stroke="#b8aa10" stroke-width=".6"/><path d="M5 8L7.6 10.4L6 11.8L3.8 9.8z" fill="#8a8a8a"/><path d="M3.8 9.8L6 11.8L2.6 12.4z" fill="#4a4a4a"/><rect x="0" y="13" width="16" height="3.2" fill="#e81414"/></svg>
<div class="u" style="left:389.5px;top:231.5px;height:16px;line-height:16px;font-size:11px;color:#000;letter-spacing:-0.251px;">Highlighting mode</div>
<div class="u" style="left:531.5px;top:231.5px;height:16px;line-height:16px;font-size:11px;color:#000;letter-spacing:-0.953px;">H</div>
<svg class="a" style="left:361px;top:253px" width="16" height="16" viewBox="0 0 16 16"><path d="M.8 11L9.2 2.4L14 .8L15 5.6L6.4 14.6z" fill="#fafcff" stroke="#8ea6c4" stroke-width=".8"/><path d="M2.6 11.2L9.6 4.2L11.8 6.4L4.8 13.2z" fill="#2f8fe8"/><circle cx="12.6" cy="3.2" r=".9" fill="#fff" stroke="#8ea6c4" stroke-width=".6"/><path d="M10.6 8.6h2.4v2.2h2.2v2.4h-2.2v2.2h-2.4v-2.2h-2.2v-2.4h2.2z" fill="#36b53a" stroke="#1e7f22" stroke-width=".6"/></svg>
<div class="u" style="left:389.5px;top:253.5px;height:16px;line-height:16px;font-size:11px;color:#000;letter-spacing:-0.364px;">Label</div>
<svg class="a" style="left:599px;top:257px" width="4" height="7" viewBox="-2 0 4 7"><polygon points="-2,0 2,3.5 -2,7" fill="#000"/></svg>
<svg class="a" style="left:361px;top:275px" width="16" height="16" viewBox="0 0 16 16"><path d="M7.8 2Q14.6 2 14.6 6.4Q14.6 9.6 11.6 10.4L12.4 12.6L9.4 10.8Q1.4 11 1.4 6.4Q1.4 2 7.8 2z" fill="url(#gY)" stroke="#c9a055" stroke-width=".8"/><path d="M2.2 9h2.4v2.2h2.2v2.4h-2.2v2.2h-2.4v-2.2h-2.2v-2.4h2.2z" fill="#36b53a" stroke="#1e7f22" stroke-width=".6"/></svg>
<div class="u" style="left:389.5px;top:275.5px;height:16px;line-height:16px;font-size:11px;color:#000;letter-spacing:-0.327px;">Comment</div>
<div class="u" style="left:531.5px;top:275.5px;height:16px;line-height:16px;font-size:11px;color:#000;letter-spacing:-0.062px;">;</div>
<svg class="a" style="left:361px;top:297px" width="16" height="16" viewBox="0 0 16 16"><path d="M.6 12.2L11.4.6L15.6 4.6L5.4 15.4L5 11.6z" fill="#e4484c" stroke="#b82c30" stroke-width=".6"/><path d="M2 11.6L11.6 1.6" stroke="#f49a9c" stroke-width="1"/><rect x="7.6" y="8" width="7.8" height="7" fill="#fdfdfd" stroke="#7c8694" stroke-width=".8"/><path d="M10 13.8V10.2H13V13.8" fill="none" stroke="#2c3444" stroke-width="1.1"/></svg>
<div class="u" style="left:389.5px;top:297.5px;height:16px;line-height:16px;font-size:11px;color:#000;letter-spacing:-0.247px;">Toggle Bookmark</div>
<div class="u" style="left:531.5px;top:297.5px;height:16px;line-height:16px;font-size:11px;color:#000;letter-spacing:0.044px;">Ctrl+D</div>
<svg class="a" style="left:361px;top:319px" width="16" height="16" viewBox="0 0 16 16"><g fill="#3c3c3c"><path d="M2.2 8.2Q4.6 7 6 8.6Q6.6 10 5.6 11.6Q5.2 13.4 5.8 14.6Q4.8 15.6 3.6 14.8Q3.4 12.6 2.6 11Q1.6 9.4 2.2 8.2z"/><circle cx="1.6" cy="6.8" r=".8"/><circle cx="3" cy="5.8" r=".8"/><circle cx="4.6" cy="5.6" r=".8"/><circle cx="6" cy="6.2" r=".7"/><path d="M9.4 3.4Q11.8 2.2 13.4 3.6Q14.2 5 13.2 6.6Q12.6 8.4 13 9.8Q12 10.8 10.8 10Q10.6 7.8 9.8 6.2Q8.8 4.6 9.4 3.4z"/><circle cx="9" cy="1.8" r=".8"/><circle cx="10.6" cy=".9" r=".8"/><circle cx="12.2" cy=".8" r=".8"/><circle cx="13.8" cy="1.6" r=".7"/></g></svg>
<div class="u" style="left:389.5px;top:319.5px;height:16px;line-height:16px;font-size:11px;color:#000;letter-spacing:-0.096px;">Trace record</div>
<svg class="a" style="left:599px;top:323px" width="4" height="7" viewBox="-2 0 4 7"><polygon points="-2,0 2,3.5 -2,7" fill="#000"/></svg>
<div class="a" style="left:386px;top:342px;width:229px;height:1px;background:#d7d7d7;"></div>
<div class="a" style="left:386px;top:343px;width:229px;height:1px;background:#fff;"></div>
<svg class="a" style="left:361px;top:350px" width="16" height="16" viewBox="0 0 16 16"><path d="M1.6 14.2L12.6 3.6" stroke="#1a1a1a" stroke-width="2.6" stroke-linecap="round"/><path d="M11 5.2L12.8 3.4" stroke="#f4f4f4" stroke-width="2.2" stroke-linecap="round"/><path d="M2.4 13.4L10.4 5.6" stroke="#6a6a6a" stroke-width=".6"/><g fill="#f0c020"><path d="M6.6 0l.7 1.6 1.6.7-1.6.7-.7 1.6-.7-1.6-1.6-.7 1.6-.7z"/><path d="M14.6 5.6l.4 1 1 .4-1 .4-.4 1-.4-1-1-.4 1-.4z"/><path d="M10.2.4l.3.8.8.3-.8.3-.3.8-.3-.8-.8-.3.8-.3z"/></g></svg>
<div class="u" style="left:389.5px;top:350.5px;height:16px;line-height:16px;font-size:11px;color:#000;letter-spacing:-0.246px;">Analysis</div>
<svg class="a" style="left:599px;top:354px" width="4" height="7" viewBox="-2 0 4 7"><polygon points="-2,0 2,3.5 -2,7" fill="#000"/></svg>
<div class="a" style="left:386px;top:373px;width:229px;height:1px;background:#d7d7d7;"></div>
<div class="a" style="left:386px;top:374px;width:229px;height:1px;background:#fff;"></div>
<svg class="a" style="will-change:transform;left:361px;top:381px" width="16" height="16" viewBox="0 0 16 16"><path d="M2.8.8H6.8V8.4H9.4L4.8 14.6L0 8.4H2.8z" fill="url(#gG)" stroke="#187a1c" stroke-width=".7" stroke-linejoin="round"/><g font-family="Liberation Serif,serif" font-weight="bold" font-size="5" fill="#222"><text x="10.4" y="4.8">01</text><text x="10.4" y="9.6">10</text><text x="10.4" y="14.4">01</text></g></svg>
<div class="u" style="left:389.5px;top:381.5px;height:16px;line-height:16px;font-size:11px;color:#000;letter-spacing:-0.412px;">Assemble</div>
<div class="u" style="left:531.5px;top:381.5px;height:16px;line-height:16px;font-size:11px;color:#000;letter-spacing:-0.521px;">Space</div>
<svg class="a" style="left:361px;top:403px" width="16" height="16" viewBox="0 0 16 16"><g transform="rotate(-42 8 8)"><rect x="-1.6" y="4.6" width="19.2" height="6.8" rx="3.4" fill="#f2be98" stroke="#c98458" stroke-width=".8"/><rect x="5.4" y="5" width="5.2" height="6" fill="#f7d3b6"/><rect x="6.8" y="6.8" width="2.4" height="2.4" fill="#f0b070"/></g></svg>
<div class="u" style="left:389.5px;top:403.5px;height:16px;line-height:16px;font-size:11px;color:#000;letter-spacing:-0.25px;">Patches</div>
<div class="u" style="left:531.5px;top:403.5px;height:16px;line-height:16px;font-size:11px;color:#000;letter-spacing:0.021px;">Ctrl+P</div>
<div class="a" style="left:386px;top:426px;width:229px;height:1px;background:#d7d7d7;"></div>
<div class="a" style="left:386px;top:427px;width:229px;height:1px;background:#fff;"></div>
<svg class="a" style="left:361px;top:434px" width="16" height="16" viewBox="0 0 16 16"><g stroke="#e6cc1c" stroke-width="1.1" stroke-linecap="round"><path d="M7.5 4V11M4 7.5H11M5 5L10 10M10 5L5 10"/></g><circle cx="7.5" cy="7.5" r="1.4" fill="#fff6a0"/></svg>
<div class="u" style="left:389.5px;top:434.5px;height:16px;line-height:16px;font-size:11px;color:#000;letter-spacing:-0.209px;">Set New Origin Here</div>
<div class="u" style="left:531.5px;top:434.5px;height:16px;line-height:16px;font-size:11px;color:#000;letter-spacing:0.631px;">Ctrl+*</div>
<svg class="a" style="left:361px;top:456px" width="16" height="16" viewBox="0 0 16 16"><path d="M1.5 1.6V14.4" stroke="#6c6c6c" stroke-width=".9"/><circle cx="1.5" cy="1.6" r="1.2" fill="#fff" stroke="#6c6c6c" stroke-width=".7"/><circle cx="1.5" cy="14.4" r="1.2" fill="#fff" stroke="#6c6c6c" stroke-width=".7"/><path d="M8.3 4.2h2.4v2.2h2.2v2.4h-2.2v2.2h-2.4v-2.2h-2.2v-2.4h2.2z" fill="#36b53a" stroke="#1e7f22" stroke-width=".6"/></svg>
<div class="u" style="left:389.5px;top:456.5px;height:16px;line-height:16px;font-size:11px;color:#000;letter-spacing:-0.127px;">Create New Thread Here</div>
<svg class="a" style="left:361px;top:478px" width="16" height="16" viewBox="0 0 16 16"><path d="M1 13.6V10Q1 8.4 2.4 8L4 4.6Q4.6 3.6 6 3.6H11Q12.2 3.6 12.8 4.6L14.4 8Q15.8 8.4 15.8 10V13.6z" fill="#5b93d6" stroke="#2f5f9f" stroke-width=".6"/><path d="M3.8 8L5 5.2Q5.2 4.6 6 4.6H10.8Q11.6 4.6 11.8 5.2L13 8z" fill="#c8ccd0"/><rect x="1.4" y="9.6" width="2.6" height="1.6" fill="#f6a020"/><rect x="12.8" y="9.6" width="2.6" height="1.6" fill="#f6a020"/><rect x="6" y="10" width="4.8" height="1.6" fill="#e8c860"/><rect x="1.6" y="13.4" width="3" height="2" rx=".6" fill="#1a1a1a"/><rect x="12.2" y="13.4" width="3" height="2" rx=".6" fill="#1a1a1a"/><path d="M8 2.2H12V.6L16 3.4L12 6.2V4.6H8z" fill="#3aa4f2" stroke="#1c78cc" stroke-width=".5"/></svg>
<div class="u" style="left:389.5px;top:478.5px;height:16px;line-height:16px;font-size:11px;color:#000;letter-spacing:-0.181px;">Go to</div>
<svg class="a" style="left:599px;top:482px" width="4" height="7" viewBox="-2 0 4 7"><polygon points="-2,0 2,3.5 -2,7" fill="#000"/></svg>
<div class="a" style="left:386px;top:501px;width:229px;height:1px;background:#d7d7d7;"></div>
<div class="a" style="left:386px;top:502px;width:229px;height:1px;background:#fff;"></div>
<svg class="a" style="left:361px;top:509px" width="16" height="16" viewBox="0 0 16 16"><path d="M8.6 4.2H4Q2 4.2 2 6.2V12.2Q2 14.2 4 14.2H10Q12 14.2 12 12.2V8.4" fill="#f2f4fc" stroke="#3554e0" stroke-width="1.3"/><path d="M8.8 1.4H14.6V7.2L12.6 5.2L6.8 11L5 9.2L10.8 3.4z" fill="#b9c6fa" stroke="#3554e0" stroke-width=".9" stroke-linejoin="round"/></svg>
<div class="u" style="left:389.5px;top:509.5px;height:16px;line-height:16px;font-size:11px;color:#000;letter-spacing:0.448px;">xrefs...</div>
<div class="u" style="left:531.5px;top:509.5px;height:16px;line-height:16px;font-size:11px;color:#000;letter-spacing:-0.844px;">X</div>
<svg class="a" style="left:361px;top:531px" width="16" height="16" viewBox="0 0 16 16"><path d="M4.6.8H11.4L14.6 4V14H4.6z" fill="#f2f7f6" stroke="#a4b8b4" stroke-width=".8"/><path d="M11.4.8V4H14.6" fill="#fff" stroke="#a4b8b4" stroke-width=".6"/><circle cx="6.8" cy="9.4" r="3.2" fill="#d4e6f6" fill-opacity=".8" stroke="#8c9cae" stroke-width="1.1"/><path d="M4.4 11.8L1.4 15" stroke="#a0a8b0" stroke-width="1.6" stroke-linecap="round"/></svg>
<div class="u" style="left:389.5px;top:531.5px;height:16px;line-height:16px;font-size:11px;color:#000;letter-spacing:-0.115px;">Search for</div>
<svg class="a" style="left:599px;top:535px" width="4" height="7" viewBox="-2 0 4 7"><polygon points="-2,0 2,3.5 -2,7" fill="#000"/></svg>
<svg class="a" style="left:361px;top:553px" width="16" height="16" viewBox="0 0 16 16"><g fill="#2e2e2e"><path d="M2.4 2.6Q2.4 1 4.4 1Q6.4 1 6.4 2.6V4.4H2.4z"/><path d="M9.6 2.6Q9.6 1 11.6 1Q13.6 1 13.6 2.6V4.4H9.6z"/><path d="M2.2 4.2H6.8L7.4 14.6Q7.4 15.4 6.4 15.4H1.6Q.8 15.4 .8 14.6z"/><path d="M9.2 4.2H13.8L15.2 14.6Q15.2 15.4 14.4 15.4H9.6Q8.6 15.4 8.6 14.6z"/><rect x="6.4" y="4.4" width="3.2" height="4.4"/></g><g stroke="#6a6a6a" stroke-width=".7"><path d="M2 6.4H7M9 6.4H14M1.4 12.6H7.2M8.8 12.6H14.8"/></g><path d="M3.2 5.2V14.4M10.6 5.2V14.4" stroke="#555" stroke-width=".8"/></svg>
<div class="u" style="left:389.5px;top:553.5px;height:16px;line-height:16px;font-size:11px;color:#000;letter-spacing:-0.042px;">Find references to</div>
<svg class="a" style="left:599px;top:557px" width="4" height="7" viewBox="-2 0 4 7"><polygon points="-2,0 2,3.5 -2,7" fill="#000"/></svg>
</body></html>
